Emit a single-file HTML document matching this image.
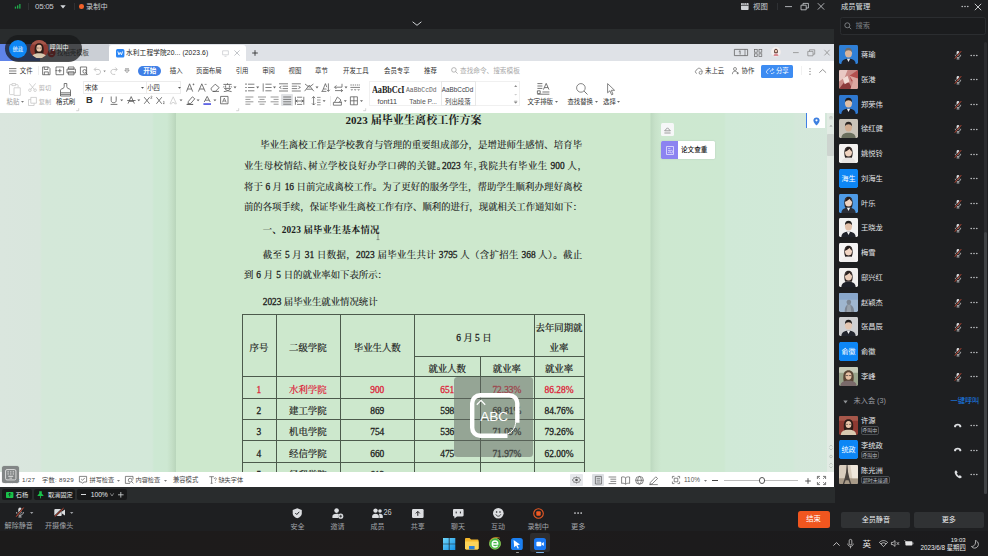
<!DOCTYPE html>
<html lang="zh-CN">
<head>
<meta charset="utf-8">
<title>会议</title>
<style>
*{box-sizing:border-box;margin:0;padding:0}
html,body{width:988px;height:556px;overflow:hidden;background:#1e1f21;}
body{position:relative;font-family:"Liberation Sans","Noto Sans CJK SC",sans-serif;font-size:8px;line-height:1;color:#d8d8d8;}
.abs{position:absolute}
.t{position:absolute;white-space:nowrap;line-height:10px;height:10px}
svg{position:absolute;overflow:visible}
#top1{left:0;top:0;width:836px;height:29px;background:#1e1f21}
#top2{left:0;top:29px;width:834px;height:15px;background:#292c2d}
#panel{left:836px;top:0;width:152px;height:531px;background:#1e1f21}
#wps{left:0;top:44px;width:834px;height:443px;background:#fff;overflow:hidden;color:#333}
#tabbar{left:0;top:0;width:834px;height:17px;background:#dfe2e7}
#menurow{left:0;top:17px;width:834px;height:15px;background:#fff}
#ribbon{left:0;top:32px;width:834px;height:37px;background:#fff}
#doc{left:0;top:69px;width:834px;height:359px;background:#d4e7d8;overflow:hidden}
#page{left:176px;top:0;width:474px;height:359px;background:#cde8cd;}
#status{left:0;top:428px;width:834px;height:15px;background:#fff}
#zoombar{left:0;top:487px;width:836px;height:14px;background:#1e1f21}
#meetbar{left:0;top:501px;width:988px;height:30px;background:#1e1f21}
#taskbar{left:0;top:531px;width:988px;height:25px;background:#1d1c1c}
#doc{background:linear-gradient(90deg,#dae6de 0,#d9e6dd 40px,#d4e8d9 42px,#d3e8d9 152px,#cde8d3 154px,#cde8d2 167px,#c4dfc6 172px,#b9d5bb 176px,#cde8cd 177px,#cde8cd 650px,#bdd9c0 651px,#c7e1c9 655px,#cde8d0 661px,#cde8d1 724px,#d0e9d7 726px,#d1e9d8 793px,#d4e8da 795px,#d5e7db 834px)}
#page{background:#cde8cd}
.ln{position:absolute;left:67.900px;width:338.200px;height:12px;line-height:12px;font-size:9.390px;color:#1c1c1c;font-family:"Liberation Serif","Noto Serif CJK SC",serif;font-weight:400;-webkit-text-stroke:.15px currentColor;white-space:nowrap;text-align:justify;text-align-last:justify}
.ln.nj{text-align:left;text-align-last:left;width:auto}
.tb{position:absolute;background:#4c5a4c}
.tc{position:absolute;height:12px;line-height:12px;font-size:9.400px;color:#1c1c1c;font-family:"Liberation Serif","Noto Serif CJK SC",serif;font-weight:400;-webkit-text-stroke:.22px currentColor;white-space:nowrap;text-align:center}
.red{color:#de2238}
.d{-webkit-text-stroke:.28px currentColor}
.bd .d{-webkit-text-stroke:0}
</style>
</head>
<body>
<div id="top1" class="abs">
  <svg style="left:14px;top:3px" width="8" height="6" viewBox="0 0 8 6"><rect x="0.8" y="3.6" width="1.3" height="2" fill="#1fae4b"/><rect x="3" y="2.4" width="1.3" height="3.2" fill="#1fae4b"/><rect x="5.2" y="1" width="1.3" height="4.6" fill="#1fae4b"/></svg>
  <div class="abs" style="left:28px;top:3px;width:1px;height:7px;background:#2f3134"></div>
  <div class="t" style="left:35px;top:1.8px;font-size:8px;color:#c9ccd1;letter-spacing:-0.3px">05:05</div>
  <svg style="left:60px;top:5px" width="6" height="4" viewBox="0 0 6 4"><path d="M0.3 0.3h5.4L3 3.5z" fill="#d5d8dc"/></svg>
  <div class="abs" style="left:74px;top:3px;width:1px;height:7px;background:#2f3134"></div>
  <div class="abs" style="left:79.2px;top:4px;width:4.6px;height:4.6px;border-radius:50%;background:#f0602a"></div>
  <div class="t" style="left:86px;top:1.5px;font-size:7.2px;color:#c9ccd1">录制中</div>
  <svg style="left:411.800px;top:20.500px" width="10" height="6" viewBox="0 0 10 6"><path d="M.6 .8 L5 4.300 L9.400 .8" fill="none" stroke="#d0d3d6" stroke-width="1"/></svg>
  <svg style="left:741px;top:2.5px" width="8" height="8" viewBox="0 0 8 8"><rect x="0" y="0" width="7.6" height="7" rx="0.8" fill="#d0d3d6"/><path d="M0 2.4h7.6" stroke="#1e1f21" stroke-width="0.7"/><path d="M2 0v1.6M3.8 0v1.6M5.6 0v1.6" stroke="#1e1f21" stroke-width="0.6"/></svg>
  <div class="t" style="left:753px;top:1.5px;font-size:7.4px;color:#c9ccd1">视图</div>
  <div class="abs" style="left:777px;top:3px;width:1px;height:7px;background:#2f3134"></div>
  <svg style="left:785px;top:2px" width="42" height="9" viewBox="0 0 42 9"><g fill="none" stroke="#cfd2d6" stroke-width="0.8"><path d="M0 4.6h7"/><path d="M16 3.2h5.2v4.6H16z"/><path d="M18 3.2V1.4h5.4v4.6h-2.2"/><path d="M32.8 1.2l6.4 6.4M39.2 1.2l-6.4 6.4"/></g></svg>
</div>
<div id="top2" class="abs"></div>
<div id="wps" class="abs">
<div id="tabbar" class="abs">
  <div class="abs" style="left:0;top:0;width:40px;height:17px;background:#5f83e8"></div>
  <div class="abs" style="left:40px;top:0;width:69px;height:17px;background:#cbcfd5"></div>
  <svg style="left:47px;top:3.500px" width="9" height="10" viewBox="0 0 9 10"><path d="M4.500.5c2.200 0 4 1.800 4 4.200S6.700 9.300 4.500 9.300.5 7.500.5 4.700c0-1 .3-1.700.8-2.300L3 5.500 4.500.5z" fill="#d8302c"/><path d="M3.400 6.400h2.800" stroke="#fff" stroke-width=".8"/></svg>
  <div class="t" style="left:57px;top:4.200px;font-size:6.400px;color:#444">找稻壳模板</div>
  <div class="abs" style="left:109px;top:.5px;width:137px;height:17px;background:#fff;border-radius:3px 3px 0 0"></div>
  <svg style="left:115.500px;top:4.700px" width="8.400" height="8.400" viewBox="0 0 10 10"><rect width="10" height="10" rx="1.800" fill="#2b86f5"/><path d="M2.200 3l1.300 4 1.500-3 1.500 3 1.300-4" fill="none" stroke="#fff" stroke-width="1.100"/></svg>
  <div class="t" style="left:126px;top:4.300px;font-size:6.700px;color:#222;letter-spacing:.12px">水利工程学院20... (2023.6)</div>
  <svg style="left:221.500px;top:5.700px" width="7" height="7" viewBox="0 0 7 7"><path d="M.6.800h5.800v4H.6zM2.500 6.300h2" fill="none" stroke="#c4c7cc" stroke-width=".7"/></svg>
  <svg style="left:233.800px;top:6px" width="6" height="6" viewBox="0 0 6 6"><path d="M.4.400l5.200 5.200M5.600.4L.4 5.600" stroke="#b4b7bc" stroke-width=".8"/></svg>
  <svg style="left:251.500px;top:5.800px" width="6" height="6" viewBox="0 0 6 6"><path d="M3 .2v5.600M.2 3h5.600" stroke="#333" stroke-width=".9"/></svg>
  <svg style="left:734px;top:5px" width="14" height="7" viewBox="0 0 14 7"><path d="M.4.400h13.200v6.200H.4z" fill="none" stroke="#555" stroke-width=".7"/><path d="M11 .4v6.200" stroke="#555" stroke-width=".6"/><path d="M4.800 2.600l1.300-.9v3.800" fill="none" stroke="#555" stroke-width=".7"/></svg>
  <svg style="left:754.200px;top:4.500px" width="8.400" height="8" viewBox="0 0 8.400 8"><g fill="none" stroke="#666" stroke-width=".7"><rect x=".4" y=".4" width="2.800" height="2.800"/><rect x="5" y=".4" width="2.800" height="2.800"/><rect x=".4" y="4.800" width="2.800" height="2.800"/><rect x="5" y="4.800" width="2.800" height="2.800"/></g></svg>
  <svg style="left:770.700px;top:3.200px" width="9.800" height="9.800" viewBox="0 0 10 10"><circle cx="5" cy="5" r="5" fill="#f4efee"/><path d="M3.200 4.500c0-2 .8-2.800 1.900-2.800s1.900.8 1.900 2.800c0 1-.2 1.600-.4 2H3.600c-.2-.4-.4-1-.4-2z" fill="#5b3a30"/><ellipse cx="5.100" cy="4.200" rx="1.100" ry="1.400" fill="#f0cdb8"/><path d="M2.600 9.300c0-1.800 1-2.700 2.500-2.700s2.500.9 2.500 2.700z" fill="#d98a92"/></svg>
  <svg style="left:792.500px;top:4.500px" width="38" height="8" viewBox="0 0 38 8"><g fill="none" stroke="#888" stroke-width=".75"><path d="M0 3.600h5.700"/><path d="M14.800 2.400h5.200v4.400h-5.200z"/><path d="M16.500 2.400V.8h5.200v4.400h-1.700"/><path d="M31.400.8l5.200 5.600M36.600.8l-5.200 5.600"/></g></svg>
</div>
<div id="menurow" class="abs" style="height:18px">
  <svg style="left:8.500px;top:6.600px" width="8" height="6" viewBox="0 0 8 6"><path d="M0 .6h7.400M0 3h7.400M0 5.400h7.400" stroke="#444" stroke-width=".7"/></svg>
  <div class="t" style="left:19.800px;top:5.100px;font-size:6.400px;color:#333">文件</div>
  <div class="abs" style="left:37.500px;top:5px;width:1px;height:9px;background:#eeeeee"></div>
  <svg style="left:42px;top:4.900px" width="90" height="9.700" viewBox="0 0 90 9" preserveAspectRatio="none">
    <g fill="none" stroke="#555" stroke-width=".75">
      <path d="M.6.900h5.900l1.500 1.500v5.700H.6z"/><path d="M2.300.9v2.300h3.600V.9M2.300 8.100V5.500h4v2.600"/>
      <path d="M14 .9h7.600v7.200H14z"/><path d="M16 4.400h3.600M17.800 2.600v3.600M13.500 4.300h2"/>
      <path d="M26.400.9h5.600v2H26.400zM25 2.900h8.400v3.600H25zM26.400 5.400h5.600v2.800h-5.600z"/>
      <path d="M38.400.9h6.200v7.200h-6.200z"/><circle cx="42.600" cy="5" r="1.700" fill="#fff"/><path d="M43.800 6.300l1.800 1.800"/>
    </g>
    <g fill="none" stroke="#bbb" stroke-width=".8"><path d="M52.400 3.200h3.600c1.500 0 2.500 1 2.500 2.300s-1 2.300-2.500 2.300h-1.800"/><path d="M54 1.400l-1.800 1.800 1.800 1.800"/>
      <path d="M75 3.200h-3.600c-1.500 0-2.500 1-2.500 2.300s1 2.300 2.500 2.300h1.800"/><path d="M73.400 1.400l1.800 1.800-1.800 1.800"/></g>
    <path d="M61.400 4.200h2.400l-1.200 1.500z" fill="#888"/>
    <path d="M82.800 3.800h4.400l-2.200 2.400z" fill="none" stroke="#666" stroke-width=".6"/><path d="M83 2.600h4" stroke="#666" stroke-width=".6"/>
  </svg>
  <div class="abs" style="left:138.300px;top:4.600px;width:22.700px;height:10.800px;border-radius:5.400px;background:#3f7fe6"></div>
  <div class="t" style="left:143.200px;top:5.100px;font-size:6.500px;color:#fff;font-weight:bold">开始</div>
  <div class="t" style="left:169.800px;top:5.300px;font-size:6.400px;color:#333">插入</div>
  <div class="t" style="left:196px;top:5.300px;font-size:6.400px;color:#333">页面布局</div>
  <div class="t" style="left:235.700px;top:5.300px;font-size:6.400px;color:#333">引用</div>
  <div class="t" style="left:262.200px;top:5.300px;font-size:6.400px;color:#333">审阅</div>
  <div class="t" style="left:288.600px;top:5.300px;font-size:6.400px;color:#333">视图</div>
  <div class="t" style="left:315px;top:5.300px;font-size:6.400px;color:#333">章节</div>
  <div class="t" style="left:343px;top:5.300px;font-size:6.400px;color:#333">开发工具</div>
  <div class="t" style="left:384px;top:5.300px;font-size:6.400px;color:#333">会员专享</div>
  <div class="t" style="left:424px;top:5.300px;font-size:6.400px;color:#333">推荐</div>
  <svg style="left:450.500px;top:6.300px" width="7" height="7" viewBox="0 0 7 7"><circle cx="2.900" cy="2.900" r="2.300" fill="none" stroke="#999" stroke-width=".7"/><path d="M4.600 4.600l2 2" stroke="#999" stroke-width=".7"/></svg>
  <div class="t" style="left:460px;top:5.300px;font-size:6.650px;color:#aaa">查找命令、搜索模板</div>
  <svg style="left:695px;top:6px" width="8" height="8" viewBox="0 0 8 8"><path d="M2 6.300c-1 0-1.700-.7-1.700-1.600 0-.8.600-1.500 1.400-1.600C2 2 2.900 1.200 4 1.200c1.300 0 2.300.9 2.400 2.100.8.100 1.300.7 1.300 1.500" fill="none" stroke="#666" stroke-width=".7"/><circle cx="5.600" cy="5.800" r="1.500" fill="none" stroke="#666" stroke-width=".7"/></svg>
  <div class="t" style="left:705px;top:5.300px;font-size:6.400px;color:#333">未上云</div>
  <svg style="left:731.500px;top:6px" width="7" height="8" viewBox="0 0 7 8"><circle cx="3" cy="2" r="1.500" fill="none" stroke="#666" stroke-width=".7"/><path d="M.4 7.200c0-2 1-3 2.600-3 1.400 0 2.300.8 2.600 2M4.600 6.200h2.200M5.700 5.100v2.200" fill="none" stroke="#666" stroke-width=".7"/></svg>
  <div class="t" style="left:741.500px;top:5.300px;font-size:6.400px;color:#333">协作</div>
  <div class="abs" style="left:761px;top:3.500px;width:32px;height:13px;border-radius:1.500px;background:#3d8cf2"></div>
  <svg style="left:765.800px;top:6px" width="8.400" height="8" viewBox="0 0 8.400 8"><path d="M2.200 6.500c-1 0-1.800-.7-1.800-1.700 0-.9.600-1.500 1.400-1.600.3-1 1.100-1.700 2.200-1.700M5 6.500h1.400c.9 0 1.600-.6 1.600-1.500" fill="none" stroke="#fff" stroke-width=".7"/><path d="M4.200 4.800c.4-1.600 1.500-2.400 3-2.400M6.200 1.200l1.300 1.200-1.300 1.200" fill="none" stroke="#fff" stroke-width=".7"/></svg>
  <div class="t" style="left:775.900px;top:5.300px;font-size:6.400px;color:#fff">分享</div>
  <div class="abs" style="left:800.500px;top:5px;width:1px;height:9px;background:#f1f1f1"></div>
  <svg style="left:808.500px;top:6.800px" width="2" height="7" viewBox="0 0 2 7"><circle cx="1" cy=".8" r=".6" fill="#666"/><circle cx="1" cy="3.500" r=".6" fill="#666"/><circle cx="1" cy="6.200" r=".6" fill="#666"/></svg>
  <svg style="left:819.300px;top:8px" width="7.400" height="4" viewBox="0 0 7.400 4"><path d="M.3 3.700L3.700.5l3.400 3.200" fill="none" stroke="#666" stroke-width=".7"/></svg>
</div>
<div id="ribbon" class="abs" style="top:35px;height:34px">
  <!-- paste / cut / copy / format painter : coords relative to ribbon top (y=79 abs) -->
  <svg style="left:9px;top:3.500px" width="12" height="13" viewBox="0 0 12 13"><g fill="none" stroke="#c9c9c9" stroke-width=".8"><path d="M3 1.600H1.200c-.4 0-.7.300-.7.700v8.600c0 .4.300.7.700.7h3.600"/><path d="M3 .6h3.600v2H3z"/><path d="M6.600 1.600h1.800c.4 0 .7.300.7.700v2"/><path d="M5 4.800h6.300v7.600H5z" fill="#fff"/></g></svg>
  <div class="t" style="left:6.600px;top:18.400px;font-size:6.300px;color:#9a9a9a">粘贴</div>
  <svg style="left:20.500px;top:22.200px" width="3" height="2" viewBox="0 0 3 2"><path d="M0 0h3L1.500 1.800z" fill="#777"/></svg>
  <svg style="left:28px;top:4px" width="9" height="9" viewBox="0 0 9 9"><g fill="none" stroke="#c4c4c4" stroke-width=".75"><path d="M1.400.4l4.800 6M7.600.4L2.800 6.400"/><circle cx="1.900" cy="7.200" r="1.300"/><circle cx="7.100" cy="7.200" r="1.300"/></g></svg>
  <div class="t" style="left:38.800px;top:3.800px;font-size:6.200px;color:#b0b0b0">剪切</div>
  <svg style="left:28px;top:17.500px" width="9" height="9" viewBox="0 0 9 9"><g fill="none" stroke="#c4c4c4" stroke-width=".75"><path d="M2.800.4h5.600v5.800H2.800z"/><path d="M2.800 2.600H.5v5.900h5.600V6.200"/></g></svg>
  <div class="t" style="left:38.800px;top:17.600px;font-size:6.200px;color:#b0b0b0">复制</div>
  <svg style="left:60px;top:3.500px" width="11" height="14" viewBox="0 0 11 14"><g fill="none" stroke="#555" stroke-width=".8"><path d="M4.200.5h2.600v3.200c0 .8.400 1.300 1.200 1.700l1.800.8c.5.200.7.600.7 1v5.800H.5V7.200c0-.4.200-.8.700-1l1.800-.8c.8-.4 1.200-.9 1.200-1.700z"/><path d="M.5 9.800h10M.5 11.400h10"/></g></svg>
  <div class="t" style="left:56px;top:18.400px;font-size:6.400px;color:#333">格式刷</div>
  <svg style="left:75.500px;top:29.300px" width="3" height="3" viewBox="0 0 3 3"><path d="M2.700.2v2.500H.2" fill="none" stroke="#aaa" stroke-width=".5"/></svg>
  <!-- font boxes -->
  <div class="abs" style="left:83.200px;top:2.200px;width:62.500px;height:12.500px;border:1px solid #ececec;border-right:none"></div>
  <div class="abs" style="left:145.700px;top:2.200px;width:35.200px;height:12.500px;border:1px solid #ececec"></div>
  <div class="t" style="left:85px;top:3.800px;font-size:6.500px;color:#333">宋体</div>
  <svg style="left:140.500px;top:8px" width="3" height="2" viewBox="0 0 3 2"><path d="M0 0h3L1.500 1.800z" fill="#555"/></svg>
  <div class="t" style="left:147.200px;top:3.800px;font-size:6.300px;color:#333">小四</div>
  <svg style="left:177.500px;top:8px" width="3" height="2" viewBox="0 0 3 2"><path d="M0 0h3L1.500 1.800z" fill="#555"/></svg>
  <!-- row 1 font tools -->
  <svg style="left:186px;top:4px" width="52" height="9" viewBox="0 0 52 9">
    <g fill="none" stroke="#555" stroke-width=".8"><path d="M.5 8.600L3.600.8l3.100 7.800M1.500 6h4.200"/><path d="M6.600 1.400h1.800M7.500.5v1.800" stroke-width=".6"/>
    <path d="M12.400 8.600L15.800.8l3.400 7.800M13.500 6h4.600"/><path d="M18.600 1.400h2" stroke-width=".6"/>
    <path d="M25.200 5.200l4-4 4 3.400-3.800 3.800h-2.600l-1.600-1.600z"/><path d="M27 8.400h6"/>
    <path d="M37.400 1.400h8.200M41.500.3v1.100M39.600 2.400v2.200M43.400 2.400v2.200M38 3.200l-.6 1.200M45 3.200l.6 1.200M38.200 5.400h6.400c-.8 1.600-2.800 2.800-6.800 3.200M38.800 5.600c1.200 1.600 3.600 2.600 6.800 3"/></g>
    <path d="M47.500 3.600h3L49 5.400z" fill="#666"/>
  </svg>
  <!-- row 2 font tools -->
  <div class="t" style="left:86px;top:16px;font-size:9.400px;font-weight:bold;color:#333;font-family:'Liberation Sans',sans-serif;line-height:10px">B</div>
  <div class="t" style="left:100.400px;top:16px;font-size:9.400px;font-style:italic;color:#555;font-family:'Liberation Sans',sans-serif;line-height:10px">I</div>
  <svg style="left:110px;top:96px;top:17px" width="130" height="10" viewBox="0 0 130 10">
    <g fill="none" stroke="#555" stroke-width=".8">
      <path d="M1.200 .5v3.900c0 1.500.9 2.300 2.500 2.300s2.500-.8 2.500-2.300V.5M.6 8.400h6.800"/>
      <path d="M18 7.600L21.200.6l3.200 7M19.200 5.400h4M17.200 4.500h8.400"/>
      <path d="M34.200 1.200l5.400 6.600M39.600 1.200l-5.400 6.600"/><path d="M40.600.5c.3-.5 1.400-.5 1.400.2 0 .5-.6.900-1.400 1.600h1.600" stroke-width=".55"/>
      <path d="M46.400 1.200l5.400 6.600M51.800 1.200l-5.400 6.600"/><path d="M53 5.800c.3-.5 1.400-.5 1.400.2 0 .5-.6.900-1.400 1.600h1.600" stroke-width=".55"/>
      <path d="M60 7.800L63.200.8l3.200 7h-1.700l-.5-1.300h-2l-.5 1.300z" stroke="#ccc"/>
      <path d="M78.400 5.400L82.400.8l2.400 2-4 4.600-2.800.4z"/><path d="M76.600 8.400h6.600" stroke-width="1"/>
      <path d="M94.200 6L97.200.4l3 5.600M95.300 4.200h3.800"/>
      <path d="M110.600.4h7.400v7.400h-7.400z"/><path d="M112.400 6.400l1.900-4.400 1.900 4.400M113 5h2.600" stroke-width=".65"/>
    </g>
    <path d="M93.400 7.400h7.600v1.300h-7.600z" fill="#1d24d8"/>
    <g fill="#666"><path d="M10.200 3.400h3l-1.500 1.800z"/><path d="M27.300 3.400h3l-1.500 1.800z"/><path d="M69.500 3.400h3L71 5.200z"/><path d="M86.600 3.400h3l-1.500 1.800z"/><path d="M103.400 3.400h3l-1.500 1.800z"/></g>
  </svg>
  <svg style="left:236px;top:29.300px" width="3" height="3" viewBox="0 0 3 3"><path d="M2.700.2v2.500H.2" fill="none" stroke="#aaa" stroke-width=".5"/></svg>
  <!-- paragraph row 1 -->
  <svg style="left:245px;top:4px" width="118" height="9" viewBox="0 0 118 9">
    <g fill="none" stroke="#555" stroke-width=".75">
      <path d="M3 1.200h6.400M3 4.500h6.400M3 7.800h6.400"/><path d="M.4 1.200h1.200M.4 4.500h1.200M.4 7.800h1.200" stroke-width="1.200"/>
      <path d="M20.400 1.200h6.200M20.400 4.500h6.200M20.400 7.800h6.200"/><path d="M18.200.4v8.200" stroke-width=".7"/>
      <path d="M34 .8h9M37.600 3.200H43M37.600 5.600H43M34 8h9M36.400 3.200L34.400 4.400l2 1.200"/>
      <path d="M46.800 .8h9M46.800 3.200h5.400M46.800 5.600h5.400M46.800 8h9M53.400 3.200l2 1.200-2 1.200"/>
      <path d="M60 1l4.200 3.200L68.400 1M59.600 8.200l4.600-6 4.600 6M61.400 6.200h5.600"/>
      <path d="M77.400 8.200L80.400.6l1.400 3.600M78.400 6h3M83.400.4v7.800M82 6.800l1.400 1.600 1.400-1.600M76.400 8.400h5"/>
      <path d="M97 .8v3.400h-7.400M91.400 2.400l-1.800 1.800 1.800 1.800M90 7.600h7.600M96 6.200l1.600 1.400L96 9"/>
      <path d="M105.400 2h9.600" stroke-dasharray="1.400 .8"/><path d="M105.400 4.400h9.600"/><path d="M106 6l.8 1.400.8-1.400M109.400 6l.8 1.400.8-1.400M112.800 6l.8 1.400.8-1.400" stroke-width=".55"/>
    </g>
    <g fill="#666"><path d="M11.200 3.600h3l-1.500 1.800z"/><path d="M28 3.600h3l-1.500 1.800z"/><path d="M70.500 3.600h3L72 5.400z"/><path d="M99.500 3.600h3L101 5.400z"/></g>
  </svg>
  <!-- paragraph row 2 -->
  <div class="abs" style="left:281px;top:15.400px;width:12.300px;height:11.800px;background:#e1e3e6;border-radius:1px"></div>
  <svg style="left:245px;top:17px" width="120" height="10" viewBox="0 0 120 10">
    <g fill="none" stroke="#777" stroke-width=".75">
      <path d="M.4 1h8M.4 3.400h5M.4 5.800h8M.4 8.200h5"/>
      <path d="M13 1h8M14.500 3.400h5M13 5.800h8M14.500 8.200h5"/>
      <path d="M25.600 1h8M28.600 3.400h5M25.600 5.800h8M28.600 8.200h5"/>
      <path d="M38.200 1h8M38.200 3.400h8M38.200 5.800h8M38.200 8.200h8" stroke="#555"/>
      <path d="M50.400.8v8M58.800.8v8M52 1.200h5.200M50.400 5h8.400M52.600 3.800L51 5l1.600 1.200M56.600 3.800L58.200 5l-1.600 1.200M52 8.400h5.200" stroke="#555"/>
      <path d="M68.600.6v8.400M67 2.200L68.600.6l1.600 1.600M67 7.400l1.600 1.600 1.600-1.600" stroke="#555"/><path d="M72 1.400h3.600M72 4h3.600M72 6.400h3.600M72 8.800h3.600"/>
      <path d="M89.600 6.200L92.400 1l3.600 3-2 2.400M88.400 6.400h8v2.800h-8zM95.400 4.800c.8.600 1.200 1.200 1 2" stroke="#555"/>
      <path d="M105.400.8h7v8h-7zM108.900.8v8M105.400 4.800h7" stroke="#555"/>
    </g>
    <g fill="#666"><path d="M77.600 4.200h3l-1.500 1.800z"/><path d="M98.800 4.200h3l-1.500 1.800z"/><path d="M115 4.200h3l-1.500 1.800z"/></g>
  </svg>
  <div class="abs" style="left:329.500px;top:16.500px;width:1px;height:10px;background:#ececec"></div>
  <svg style="left:362.500px;top:29.300px" width="3" height="3" viewBox="0 0 3 3"><path d="M2.700.2v2.500H.2" fill="none" stroke="#aaa" stroke-width=".5"/></svg>
  <!-- styles gallery -->
  <div class="abs" style="left:369.200px;top:2.200px;width:150.600px;height:25px;border:1px solid #f0f0f0"></div>
  <div class="abs" style="left:440.500px;top:2.200px;width:35px;height:25px;border:1px solid #e8e8e8"></div>
  <div class="t" style="left:371.600px;top:5.500px;font-size:9.300px;font-weight:bold;color:#222;font-family:'Liberation Serif',serif;line-height:10px;letter-spacing:-.1px;transform-origin:0 50%;transform:scaleX(.888)">AaBbCcI</div>
  <div class="t" style="left:406px;top:6.500px;font-size:6.400px;color:#666;font-family:'Liberation Mono',monospace;line-height:10px;letter-spacing:0px">AaBbCcDd</div>
  <div class="t" style="left:441.800px;top:6.400px;font-size:6.350px;color:#3a3f4a;line-height:10px">AaBbCcDd</div>
  <div class="t" style="left:377.400px;top:18.400px;font-size:7.250px;color:#444">font11</div>
  <div class="t" style="left:409.300px;top:18.400px;font-size:6.870px;color:#555">Table P...</div>
  <div class="t" style="left:445px;top:18.400px;font-size:6.400px;color:#444">列出段落</div>
  <svg style="left:514px;top:5.500px" width="3.400" height="20" viewBox="0 0 3.400 20"><path d="M.2 1.800h3L1.700.2z" fill="#666"/><path d="M.2 9h3L1.700 10.600z" fill="#ccc"/><path d="M.2 16.800h3L1.700 18.400zM.2 16h3" fill="#888" stroke="#888" stroke-width=".4"/></svg>
  <!-- right tools -->
  <svg style="left:536.600px;top:4px" width="12.400" height="12" viewBox="0 0 12.400 12"><g fill="none" stroke="#555" stroke-width=".8"><path d="M.4.600h5M.4 3h5M.4 5.400h5M.4 11.200h12M5.400 9h7"/><path d="M.4 7.800h2.800v2.800H.4z"/><path d="M6.400 6.600L9.200.4 12 6.600M7.400 4.600h3.600"/></g></svg>
  <div class="t" style="left:527.400px;top:18.400px;font-size:6.400px;color:#333">文字排版</div>
  <svg style="left:554.600px;top:22.200px" width="3" height="2" viewBox="0 0 3 2"><path d="M0 0h3L1.500 1.800z" fill="#666"/></svg>
  <svg style="left:576.300px;top:4px" width="12" height="12" viewBox="0 0 12 12"><circle cx="4.900" cy="4.900" r="4.300" fill="none" stroke="#666" stroke-width=".8"/><path d="M8.100 8.100l3.400 3.400" stroke="#666" stroke-width=".9"/></svg>
  <div class="t" style="left:567.400px;top:18.400px;font-size:6.400px;color:#333">查找替换</div>
  <svg style="left:594.600px;top:22.200px" width="3" height="2" viewBox="0 0 3 2"><path d="M0 0h3L1.500 1.800z" fill="#666"/></svg>
  <svg style="left:606.600px;top:3.800px" width="9" height="12.500" viewBox="0 0 9 12.500"><path d="M.6.600v9.200l2.300-2 1.700 4 1.400-.6-1.700-3.900h3.300z" fill="none" stroke="#666" stroke-width=".8" stroke-linejoin="round"/></svg>
  <div class="t" style="left:603px;top:18.400px;font-size:6.400px;color:#333">选择</div>
  <svg style="left:616.800px;top:22.200px" width="3" height="2" viewBox="0 0 3 2"><path d="M0 0h3L1.500 1.800z" fill="#666"/></svg>
</div>
<div id="doc" class="abs">
 <div id="page" class="abs">
  <div class="ln nj bd" style="left:169.400px;top:.8px;font-size:11px;font-weight:bold;-webkit-text-stroke:0;letter-spacing:.1px"><span class="d">2023</span> 届毕业生离校工作方案</div>
  <div class="ln" style="left:84.300px;width:321.800px;top:25.900px">毕业生离校工作是学校教育与管理的重要组成部分，是增进师生感情、培育毕</div>
  <div class="ln" style="top:46.800px;font-feature-settings:'halt' 1">业生母校情结、树立学校良好办学口碑的关键。<span class="d">2023</span> 年，我院共有毕业生 <span class="d">900</span> 人，</div>
  <div class="ln" style="top:67.600px">将于 <span class="d">6</span> 月 <span class="d">16</span> 日前完成离校工作。为了更好的服务学生，帮助学生顺利办理好离校</div>
  <div class="ln" style="top:88.400px">前的各项手续，保证毕业生离校工作有序、顺利的进行，现就相关工作通知如下：</div>
  <div class="ln nj bd" style="left:86.700px;top:111.200px;font-weight:bold;-webkit-text-stroke:0;letter-spacing:.14px">一、<span class="d">2023</span> 届毕业生基本情况</div>
  <div class="ln" style="left:86.700px;width:319.400px;top:135.600px">截至 <span class="d">5</span> 月 <span class="d">31</span> 日数据，<span class="d">2023</span> 届毕业生共计 <span class="d">3795</span> 人（含扩招生 <span class="d">368</span> 人）。截止</div>
  <div class="ln nj" style="top:156.400px;word-spacing:.6px">到 <span class="d">6</span> 月 <span class="d">5</span> 日的就业率如下表所示：</div>
  <div class="ln nj" style="left:86.700px;top:183px"><span class="d">2023</span> 届毕业生就业情况统计</div>
  <svg style="left:199.500px;top:119px" width="4" height="8" viewBox="0 0 4 8"><path d="M.6.400h2.800M2 .4v7.200M.6 7.600h2.800" stroke="#555" stroke-width=".6" fill="none"/></svg>
  <!-- table: page-left = 176 abs, doc-top = 113 abs -->
  <div class="tb" style="left:66.300px;top:200.900px;width:342.600px;height:.8px"></div>
  <div class="tb" style="left:238.300px;top:242.500px;width:170.600px;height:.8px"></div>
  <div class="tb" style="left:66.300px;top:263.300px;width:342.600px;height:.8px"></div>
  <div class="tb" style="left:66.300px;top:284.700px;width:342.600px;height:.8px"></div>
  <div class="tb" style="left:66.300px;top:305.900px;width:342.600px;height:.8px"></div>
  <div class="tb" style="left:66.300px;top:327.300px;width:342.600px;height:.8px"></div>
  <div class="tb" style="left:66.300px;top:348.600px;width:342.600px;height:.8px"></div>
  <div class="tb" style="left:66.300px;top:200.900px;width:.8px;height:160px"></div>
  <div class="tb" style="left:99.500px;top:200.900px;width:.8px;height:160px"></div>
  <div class="tb" style="left:164.200px;top:200.900px;width:.8px;height:160px"></div>
  <div class="tb" style="left:238.300px;top:200.900px;width:.8px;height:160px"></div>
  <div class="tb" style="left:304.200px;top:242.500px;width:.8px;height:120px"></div>
  <div class="tb" style="left:357.600px;top:200.900px;width:.8px;height:160px"></div>
  <div class="tb" style="left:408.400px;top:200.900px;width:.8px;height:160px"></div>
  <div class="tc" style="left:66.300px;width:33.200px;top:229px">序号</div>
  <div class="tc" style="left:99.500px;width:64.700px;top:229px">二级学院</div>
  <div class="tc" style="left:164.200px;width:74.100px;top:229px">毕业生人数</div>
  <div class="tc" style="left:238.300px;width:119.300px;top:219px"><span class="d">6</span> 月 <span class="d">5</span> 日</div>
  <div class="tc" style="left:357.600px;width:50.800px;top:209.400px">去年同期就</div>
  <div class="tc" style="left:357.600px;width:50.800px;top:228.500px">业率</div>
  <div class="tc" style="left:238.300px;width:65.900px;top:249.700px">就业人数</div>
  <div class="tc" style="left:304.200px;width:53.400px;top:249.700px">就业率</div>
  <div class="tc" style="left:357.600px;width:50.800px;top:249.700px">就业率</div>
  <div class="tc red" style="left:66.300px;width:33.200px;top:270.500px"><span class="d">1</span></div>
  <div class="tc red" style="left:99.500px;width:64.700px;top:270.500px">水利学院</div>
  <div class="tc red" style="left:164.200px;width:74.100px;top:270.500px"><span class="d">900</span></div>
  <div class="tc red" style="left:238.300px;width:65.900px;top:270.500px"><span class="d">651</span></div>
  <div class="tc red" style="left:304.200px;width:53.400px;top:270.500px"><span class="d">72.33%</span></div>
  <div class="tc red" style="left:357.600px;width:50.800px;top:270.500px"><span class="d">86.28%</span></div>
  <div class="tc" style="left:66.300px;width:33.200px;top:292px"><span class="d">2</span></div>
  <div class="tc" style="left:99.500px;width:64.700px;top:292px">建工学院</div>
  <div class="tc" style="left:164.200px;width:74.100px;top:292px"><span class="d">869</span></div>
  <div class="tc" style="left:238.300px;width:65.900px;top:292px"><span class="d">598</span></div>
  <div class="tc" style="left:304.200px;width:53.400px;top:292px"><span class="d">68.81%</span></div>
  <div class="tc" style="left:357.600px;width:50.800px;top:292px"><span class="d">84.76%</span></div>
  <div class="tc" style="left:66.300px;width:33.200px;top:313.300px"><span class="d">3</span></div>
  <div class="tc" style="left:99.500px;width:64.700px;top:313.300px">机电学院</div>
  <div class="tc" style="left:164.200px;width:74.100px;top:313.300px"><span class="d">754</span></div>
  <div class="tc" style="left:238.300px;width:65.900px;top:313.300px"><span class="d">536</span></div>
  <div class="tc" style="left:304.200px;width:53.400px;top:313.300px"><span class="d">71.09%</span></div>
  <div class="tc" style="left:357.600px;width:50.800px;top:313.300px"><span class="d">79.26%</span></div>
  <div class="tc" style="left:66.300px;width:33.200px;top:334.700px"><span class="d">4</span></div>
  <div class="tc" style="left:99.500px;width:64.700px;top:334.700px">经信学院</div>
  <div class="tc" style="left:164.200px;width:74.100px;top:334.700px"><span class="d">660</span></div>
  <div class="tc" style="left:238.300px;width:65.900px;top:334.700px"><span class="d">475</span></div>
  <div class="tc" style="left:304.200px;width:53.400px;top:334.700px"><span class="d">71.97%</span></div>
  <div class="tc" style="left:357.600px;width:50.800px;top:334.700px"><span class="d">62.00%</span></div>
  <div class="tc" style="left:66.300px;width:33.200px;top:356px"><span class="d">5</span></div>
  <div class="tc" style="left:99.500px;width:64.700px;top:356px">经贸学院</div>
  <div class="tc" style="left:164.200px;width:74.100px;top:356px"><span class="d">612</span></div>
  <!-- ABC overlay -->
  <div class="abs" style="left:278.100px;top:264px;width:78.500px;height:80px;border-radius:3.500px;background:rgba(98,103,98,.52)"></div>
  <svg style="left:294.300px;top:280.400px" width="49.500" height="45" viewBox="0 0 49.500 45"><path d="M37.500 42.800H10.200c-4.400 0-8-3.600-8-8V10.200c0-4.400 3.600-8 8-8h29.100c4.400 0 8 3.600 8 8v19.600" fill="none" stroke="#fff" stroke-width="4.400"/><path d="M45.600 29.600c-.4 5.400-3.200 9.400-8.200 11.400" fill="none" stroke="#fff" stroke-width="1"/><path d="M6.800 11.800l4.200-4.400 4.200 4.400" fill="none" stroke="#fff" stroke-width="1.300"/><text x="24.200" y="28.300" font-size="13.600" fill="#fff" text-anchor="middle" font-family="Liberation Sans, sans-serif">ABC</text></svg>
 </div>
 <!-- right side widgets -->
 <div class="abs" style="left:660.600px;top:10.400px;width:13.500px;height:12.600px;background:#f6f7f8;border-radius:1.500px"></div>
 <svg style="left:664px;top:13.500px" width="7" height="7" viewBox="0 0 7 7"><path d="M.6 3.800L3.500.8l2.900 3zM.4 6h6.200" fill="none" stroke="#777" stroke-width=".7"/></svg>
 <div class="abs" style="left:660.600px;top:28.400px;width:54.700px;height:17.200px;background:#fff;border-radius:1.500px;box-shadow:0 0 2px rgba(0,0,0,.12)"></div>
 <div class="abs" style="left:660.600px;top:28.400px;width:17px;height:17.200px;background:#8c83f1;border-radius:1.500px 0 0 1.500px"></div>
 <svg style="left:665.500px;top:32.600px" width="8" height="9" viewBox="0 0 8 9"><path d="M.5.500h7v8h-7z" fill="none" stroke="#e9e6ff" stroke-width=".8"/><path d="M2 2.600h2.400M2 4.500h2M2 6.400h1.600" stroke="#e9e6ff" stroke-width=".7"/><circle cx="5.300" cy="5.600" r="1.300" fill="none" stroke="#e9e6ff" stroke-width=".7"/></svg>
 <div class="t" style="left:681px;top:32px;font-size:6.600px;color:#111;font-weight:500">论文查重</div>
 <div class="abs" style="left:806px;top:0;width:19px;height:15px;background:#fff;border-left:1.200px solid #3f7fe6"></div>
 <svg style="left:812.500px;top:3.500px" width="7" height="9" viewBox="0 0 7 9"><path d="M3.500.4C1.700.4.400 1.700.4 3.400c0 2 3.100 5 3.100 5s3.100-3 3.100-5C6.600 1.700 5.300.4 3.500.4z" fill="#3d7fe0"/><circle cx="3.500" cy="3.300" r="1.100" fill="#fff"/></svg>
 <div class="abs" style="left:826.500px;top:0;width:7.500px;height:359px;background:#e2ebe4"></div>
 <div class="abs" style="left:827px;top:21px;width:6.500px;height:22px;background:#cdd4cf;border-radius:1px"></div>
 <svg style="left:828.500px;top:331px" width="4" height="24" viewBox="0 0 4 24"><path d="M.4 2.600L2 1l1.600 1.600M.4 4.400L2 6l1.600-1.600M.4 20.600L2 19l1.600 1.600M.4 22.400L2 24l1.600-1.600" stroke="#9aa39c" stroke-width=".5" fill="none"/><circle cx="2" cy="12.500" r="1.300" fill="none" stroke="#9aa39c" stroke-width=".5"/></svg>
 <svg style="left:828.500px;top:3px" width="4" height="12" viewBox="0 0 4 12"><path d="M.3 1.400h3.400M.3 2.800h3.400M.5 1L2 .2 3.500 1" stroke="#aaa" stroke-width=".5" fill="none"/><path d="M.4 10.600L2 9l1.600 1.600z" fill="#999"/></svg>
</div>
<div id="status" class="abs" style="top:428.500px;height:14.500px">
  <div class="t" style="left:5px;top:2.600px;font-size:6.200px;letter-spacing:.3px;color:#444">页面: 1/27</div>
  <div class="t" style="left:42px;top:2.600px;font-size:6.200px;letter-spacing:.3px;color:#444">字数: 8929</div>
  <svg style="left:79px;top:3.700px" width="8" height="8" viewBox="0 0 8 8"><path d="M.4.400h7.200v5.600H4.800L3.600 7.400 2.400 6H.4z" fill="none" stroke="#555" stroke-width=".7"/><path d="M2.200 3l1.300 1.300 2.300-2.400" fill="none" stroke="#555" stroke-width=".7"/></svg>
  <div class="t" style="left:89.500px;top:2.600px;font-size:6.200px;color:#444">拼写检查</div>
  <svg style="left:117px;top:7px" width="3" height="2" viewBox="0 0 3 2"><path d="M0 0h3L1.500 1.800z" fill="#777"/></svg>
  <svg style="left:125px;top:3.700px" width="9" height="8" viewBox="0 0 9 8"><path d="M5 7.400H.4V.4h7.600v3" fill="none" stroke="#555" stroke-width=".7"/><circle cx="5.200" cy="4.200" r="1.900" fill="none" stroke="#555" stroke-width=".7"/><path d="M6.600 5.600l1.800 1.800" stroke="#555" stroke-width=".7"/></svg>
  <div class="t" style="left:135.500px;top:2.600px;font-size:6.200px;color:#444">内容检查</div>
  <svg style="left:163.500px;top:7px" width="3" height="2" viewBox="0 0 3 2"><path d="M0 0h3L1.500 1.800z" fill="#777"/></svg>
  <div class="t" style="left:173px;top:2.600px;font-size:6.300px;color:#444">兼容模式</div>
  <svg style="left:209px;top:3.700px" width="8" height="8" viewBox="0 0 8 8"><path d="M.3.700h4.600M2.600.7v6.600M1.600 7.300h2" fill="none" stroke="#555" stroke-width=".7"/><path d="M5.200 3c0-.8.500-1.200 1.100-1.200.7 0 1.100.4 1.100 1 0 .9-1.100.9-1.100 2M6.300 6v.8" fill="none" stroke="#555" stroke-width=".6"/></svg>
  <div class="t" style="left:218.400px;top:2.600px;font-size:6.200px;color:#444">缺失字体</div>
  <!-- right -->
  <div class="abs" style="left:570px;top:1.500px;width:12.700px;height:12px;background:#e6e8eb;border-radius:1px"></div>
  <svg style="left:571.800px;top:3.800px" width="9" height="8" viewBox="0 0 9 8"><path d="M.4 4c1-1.700 2.400-2.500 4.100-2.500S7.600 2.300 8.600 4c-1 1.700-2.400 2.500-4.100 2.500S1.400 5.700.4 4z" fill="none" stroke="#555" stroke-width=".7"/><circle cx="4.500" cy="4" r="1.300" fill="#555"/><path d="M1.600 1.200l.8.900M4.500.3v1M7.400 1.200l-.8.900M1.600 6.800l.8-.9M7.400 6.800l-.8-.9M4.500 7.700v-1" stroke="#555" stroke-width=".5"/></svg>
  <div class="abs" style="left:591.700px;top:1.500px;width:12.300px;height:12px;background:#dcdfe3;border-radius:1px"></div>
  <svg style="left:594.800px;top:3.500px" width="66" height="9" viewBox="0 0 66 9"><g fill="none" stroke="#555" stroke-width=".7">
    <path d="M.4.400h6v7.600h-6z"/><path d="M1.700 2.400h3.400M1.700 4.200h3.400M1.700 6h3.400" stroke-width=".6"/>
    <path d="M13.600 1h7.600M15.400 3.200h5.800M15.400 5.400h5.800M13.600 7.600h7.600"/>
    <path d="M26.600 1c1.600-.4 3 0 4 .8 1-.8 2.400-1.200 4-.8v6.400c-1.600-.4-3 0-4 .8-1-.8-2.400-1.200-4-.8zM30.600 1.800v6.400"/>
    <circle cx="44.500" cy="4.300" r="3.900"/><path d="M40.600 4.300h7.800M44.500.4c-2.400 2.400-2.400 5.400 0 7.800M44.500.4c2.400 2.400 2.400 5.400 0 7.800"/>
    <path d="M55.400 6.400L60.800.8l1.800 1.700-5.500 5.400-2.200.5zM54.400 8.600h8.400"/>
  </g></svg>
  <svg style="left:672px;top:3.800px" width="8" height="8" viewBox="0 0 8 8"><g fill="none" stroke="#555" stroke-width=".7"><path d="M.4 2.400v-2h2M5.600.4h2v2M7.600 5.600v2h-2M2.400 7.600h-2v-2"/><path d="M2.200 2.200h3.600v3.600H2.200z"/></g></svg>
  <div class="t" style="left:684px;top:2.600px;font-size:6.400px;color:#555">110%</div>
  <svg style="left:703.500px;top:7px" width="3" height="2" viewBox="0 0 3 2"><path d="M0 0h3L1.500 1.800z" fill="#777"/></svg>
  <div class="abs" style="left:712px;top:7.400px;width:5.800px;height:1px;background:#444"></div>
  <div class="abs" style="left:724.400px;top:7.500px;width:73.600px;height:.8px;background:#bdbdbd"></div>
  <div class="abs" style="left:758.500px;top:4.600px;width:6.600px;height:6.600px;border-radius:50%;background:#fff;border:.9px solid #555"></div>
  <svg style="left:805px;top:5px" width="6" height="6" viewBox="0 0 6 6"><path d="M3 .2v5.600M.2 3h5.600" stroke="#444" stroke-width=".9"/></svg>
  <svg style="left:817.300px;top:3.600px" width="9" height="9" viewBox="0 0 9 9"><g fill="none" stroke="#555" stroke-width=".8"><path d="M.4 3V.4H3M6 .4h2.600V3M8.600 6v2.600H6M3 8.600H.4V6"/><path d="M.6.600l2.400 2.400M8.400.6L6 3M8.400 8.400L6 6M.6 8.400L3 6" stroke-width=".6"/></g></svg>
</div>
<!-- floating keyboard icon -->
<div class="abs" style="left:2px;top:422px;width:16.500px;height:16.500px;border-radius:2.500px;background:#828686;box-shadow:0 0 1px rgba(0,0,0,.4)"></div>
<svg style="left:4.500px;top:424.500px" width="11.500" height="11.500" viewBox="0 0 12 12"><rect x=".6" y=".6" width="10.800" height="10.800" rx="1.500" fill="none" stroke="#e8e8e8" stroke-width=".9"/><path d="M2.600 3h1.400M5.300 3h1.400M8 3h1.400M2.600 5.200h1.400M5.300 5.200h1.400M8 5.200h1.400M3.400 7.600h5.200" stroke="#e8e8e8" stroke-width="1"/><path d="M4.600 9.600h2.800" stroke="#e8e8e8" stroke-width=".8"/></svg>
</div>
<div id="panel" class="abs">
<div class="t" style="left:5px;top:1.500px;font-size:7.300px;color:#dfe1e4">成员管理</div>
<svg style="left:124.5px;top:5px" width="8" height="3" viewBox="0 0 8 3"><circle cx="1.200" cy="1.500" r=".75" fill="#d0d2d5"/><circle cx="4" cy="1.500" r=".75" fill="#d0d2d5"/><circle cx="6.800" cy="1.500" r=".75" fill="#d0d2d5"/></svg>
<svg style="left:138px;top:2.800px" width="8" height="8" viewBox="0 0 8 8"><path d="M.8.8l6.400 6.400M7.200.8L.8 7.200" stroke="#d6d8db" stroke-width=".9"/></svg>
<div class="abs" style="left:3.500px;top:17px;width:146px;height:17.500px;border:1px solid #2b2d30;border-radius:2.500px;background:#1b1c1e"></div>
<svg style="left:8px;top:22px" width="8" height="8" viewBox="0 0 8 8"><circle cx="3.300" cy="3.300" r="2.500" fill="none" stroke="#8d9094" stroke-width=".8"/><path d="M5.200 5.200l2 2" stroke="#8d9094" stroke-width=".8"/></svg>
<div class="t" style="left:19.500px;top:20.800px;font-size:7.200px;color:#7d8084">搜索</div>
<svg style="left:3px;top:45.00px" width="19" height="19" viewBox="0 0 20 20"><clipPath id="c0"><rect width="20" height="20" rx="1.500"/></clipPath><g clip-path="url(#c0)"><rect width="20" height="20" fill="#2f7fd6"/><path d="M2.500 20c0-4 3-5.600 7.500-5.600s7.500 1.600 7.500 5.600z" fill="#1d2028"/><path d="M8.300 14.500l1.700 3.500 1.700-3.500z" fill="#e9ecf2"/><ellipse cx="10" cy="8.600" rx="3.700" ry="4.500" fill="#d9b59c"/><path d="M6.200 8c0-3.600 1.500-5 3.800-5s3.800 1.400 3.800 5c-.7-1.800-1.900-2.500-3.800-2.500S6.900 6.200 6.200 8z" fill="#6d6a68"/></g></svg>
<div class="t" style="left:25px;top:50.20px;font-size:7.300px;color:#e2e4e7">蒋瑜</div>
<svg style="left:117.2px;top:50.00px" width="10" height="10" viewBox="0 0 10 10"><rect x="3.600" y="1" width="2.800" height="5" rx="1.400" fill="#dadcdf"/><path d="M2.300 4.800c0 1.700 1.200 2.700 2.700 2.700s2.700-1 2.700-2.700M5 7.500v1.400M3.600 9h2.800" fill="none" stroke="#dadcdf" stroke-width=".7"/><path d="M1.600 8.800L8.300 1" stroke="#1e1f21" stroke-width="1.700"/><path d="M1.800 8.700L8.200 1.200" stroke="#e8533a" stroke-width=".8"/></svg>
<svg style="left:133.5px;top:53.60px" width="8" height="3" viewBox="0 0 8 3"><circle cx="1.200" cy="1.500" r=".75" fill="#d0d2d5"/><circle cx="4" cy="1.500" r=".75" fill="#d0d2d5"/><circle cx="6.800" cy="1.500" r=".75" fill="#d0d2d5"/></svg>
<svg style="left:3px;top:69.75px" width="19" height="19" viewBox="0 0 20 20"><clipPath id="c1"><rect width="20" height="20" rx="1.500"/></clipPath><g clip-path="url(#c1)"><rect width="20" height="20" fill="#c98a86"/><path d="M0 0h9l-3 8-6 4z" fill="#e9c9c4"/><path d="M20 0v9l-7 3-2-6z" fill="#b4504e"/><path d="M0 20l6-8 5 2 3 6z" fill="#8c3b3c"/><path d="M11 6l4 6-3 8h8v-11z" fill="#dba7a0"/><path d="M4 9l5-3 2 6-5 3z" fill="#f1dcd6"/></g></svg>
<div class="t" style="left:25px;top:74.95px;font-size:7.300px;color:#e2e4e7">张港</div>
<svg style="left:117.2px;top:74.75px" width="10" height="10" viewBox="0 0 10 10"><rect x="3.600" y="1" width="2.800" height="5" rx="1.400" fill="#dadcdf"/><path d="M2.300 4.800c0 1.700 1.200 2.700 2.700 2.700s2.700-1 2.700-2.700M5 7.500v1.400M3.600 9h2.800" fill="none" stroke="#dadcdf" stroke-width=".7"/><path d="M1.600 8.800L8.300 1" stroke="#1e1f21" stroke-width="1.700"/><path d="M1.800 8.700L8.200 1.200" stroke="#e8533a" stroke-width=".8"/></svg>
<svg style="left:133.5px;top:78.35px" width="8" height="3" viewBox="0 0 8 3"><circle cx="1.200" cy="1.500" r=".75" fill="#d0d2d5"/><circle cx="4" cy="1.500" r=".75" fill="#d0d2d5"/><circle cx="6.800" cy="1.500" r=".75" fill="#d0d2d5"/></svg>
<svg style="left:3px;top:94.50px" width="19" height="19" viewBox="0 0 20 20"><clipPath id="c2"><rect width="20" height="20" rx="1.500"/></clipPath><g clip-path="url(#c2)"><rect width="20" height="20" fill="#2e78d0"/><path d="M2.500 20c0-4 3-5.600 7.500-5.600s7.500 1.600 7.500 5.600z" fill="#1b1e26"/><path d="M8.300 14.500l1.700 3.500 1.700-3.500z" fill="#f2f4f8"/><ellipse cx="10" cy="8.600" rx="3.700" ry="4.500" fill="#e0bfa6"/><path d="M6.200 8c0-3.600 1.500-5 3.800-5s3.800 1.400 3.800 5c-.7-1.800-1.900-2.500-3.800-2.500S6.900 6.200 6.200 8z" fill="#1f1b1a"/></g></svg>
<div class="t" style="left:25px;top:99.70px;font-size:7.300px;color:#e2e4e7">郑荣伟</div>
<svg style="left:117.2px;top:99.50px" width="10" height="10" viewBox="0 0 10 10"><rect x="3.600" y="1" width="2.800" height="5" rx="1.400" fill="#dadcdf"/><path d="M2.300 4.800c0 1.700 1.200 2.700 2.700 2.700s2.700-1 2.700-2.700M5 7.500v1.400M3.600 9h2.800" fill="none" stroke="#dadcdf" stroke-width=".7"/><path d="M1.600 8.800L8.300 1" stroke="#1e1f21" stroke-width="1.700"/><path d="M1.800 8.700L8.200 1.200" stroke="#e8533a" stroke-width=".8"/></svg>
<svg style="left:133.5px;top:103.10px" width="8" height="3" viewBox="0 0 8 3"><circle cx="1.200" cy="1.500" r=".75" fill="#d0d2d5"/><circle cx="4" cy="1.500" r=".75" fill="#d0d2d5"/><circle cx="6.800" cy="1.500" r=".75" fill="#d0d2d5"/></svg>
<svg style="left:3px;top:119.25px" width="19" height="19" viewBox="0 0 20 20"><clipPath id="c3"><rect width="20" height="20" rx="1.500"/></clipPath><g clip-path="url(#c3)"><rect width="20" height="20" fill="#c9c3b8"/><path d="M2.500 20c0-4 3-5.600 7.500-5.600s7.500 1.600 7.500 5.600z" fill="#6a6f5d"/><ellipse cx="10" cy="8.600" rx="3.700" ry="4.500" fill="#d2ad90"/><path d="M6.200 8c0-3.600 1.500-5 3.800-5s3.800 1.400 3.800 5c-.7-1.800-1.900-2.500-3.800-2.500S6.900 6.200 6.200 8z" fill="#2b2623"/></g></svg>
<div class="t" style="left:25px;top:124.45px;font-size:7.300px;color:#e2e4e7">徐红健</div>
<svg style="left:117.2px;top:124.25px" width="10" height="10" viewBox="0 0 10 10"><rect x="3.600" y="1" width="2.800" height="5" rx="1.400" fill="#dadcdf"/><path d="M2.300 4.800c0 1.700 1.200 2.700 2.700 2.700s2.700-1 2.700-2.700M5 7.500v1.400M3.600 9h2.800" fill="none" stroke="#dadcdf" stroke-width=".7"/><path d="M1.600 8.800L8.300 1" stroke="#1e1f21" stroke-width="1.700"/><path d="M1.800 8.700L8.200 1.200" stroke="#e8533a" stroke-width=".8"/></svg>
<svg style="left:133.5px;top:127.85px" width="8" height="3" viewBox="0 0 8 3"><circle cx="1.200" cy="1.500" r=".75" fill="#d0d2d5"/><circle cx="4" cy="1.500" r=".75" fill="#d0d2d5"/><circle cx="6.800" cy="1.500" r=".75" fill="#d0d2d5"/></svg>
<svg style="left:3px;top:144.00px" width="19" height="19" viewBox="0 0 20 20"><clipPath id="c4"><rect width="20" height="20" rx="1.500"/></clipPath><g clip-path="url(#c4)"><rect width="20" height="20" fill="#f4f2f0"/><path d="M5.6 9.5c0-5 2-6.6 4.4-6.6s4.4 1.6 4.4 6.6c0 2.5-.6 4-1 5h-6.8c-.4-1-1-2.500-1-5z" fill="#2a211f"/><path d="M2.500 20c0-4 3-5.600 7.500-5.600s7.500 1.600 7.500 5.600z" fill="#e8e4e2"/><ellipse cx="10" cy="8.600" rx="3.700" ry="4.500" fill="#f0d3c0"/><path d="M6.200 8.200c.2-3.400 1.700-4.600 3.800-4.600s3.600 1.200 3.800 4.600c-1.200-.7-2.200-2.100-2.800-3.100-1 1.500-2.800 2.500-4.800 3.100z" fill="#2a211f"/></g></svg>
<div class="t" style="left:25px;top:149.20px;font-size:7.300px;color:#e2e4e7">姚悦铃</div>
<svg style="left:117.2px;top:149.00px" width="10" height="10" viewBox="0 0 10 10"><rect x="3.600" y="1" width="2.800" height="5" rx="1.400" fill="#dadcdf"/><path d="M2.300 4.800c0 1.700 1.200 2.700 2.700 2.700s2.700-1 2.700-2.700M5 7.500v1.400M3.600 9h2.800" fill="none" stroke="#dadcdf" stroke-width=".7"/><path d="M1.600 8.800L8.300 1" stroke="#1e1f21" stroke-width="1.700"/><path d="M1.800 8.700L8.200 1.200" stroke="#e8533a" stroke-width=".8"/></svg>
<svg style="left:133.5px;top:152.60px" width="8" height="3" viewBox="0 0 8 3"><circle cx="1.200" cy="1.500" r=".75" fill="#d0d2d5"/><circle cx="4" cy="1.500" r=".75" fill="#d0d2d5"/><circle cx="6.800" cy="1.500" r=".75" fill="#d0d2d5"/></svg>
<svg style="left:3px;top:168.75px" width="19" height="19" viewBox="0 0 20 20"><clipPath id="c5"><rect width="20" height="20" rx="1.500"/></clipPath><g clip-path="url(#c5)"><rect width="20" height="20" rx="1.500" fill="#0d86f5"/><text x="10" y="12.800" font-size="7.400" fill="#fff" text-anchor="middle" font-family="Liberation Sans, Noto Sans CJK SC, sans-serif">海生</text></g></svg>
<div class="t" style="left:25px;top:173.95px;font-size:7.300px;color:#e2e4e7">刘海生</div>
<svg style="left:117.2px;top:173.75px" width="10" height="10" viewBox="0 0 10 10"><rect x="3.600" y="1" width="2.800" height="5" rx="1.400" fill="#dadcdf"/><path d="M2.300 4.800c0 1.700 1.200 2.700 2.700 2.700s2.700-1 2.700-2.700M5 7.500v1.400M3.600 9h2.800" fill="none" stroke="#dadcdf" stroke-width=".7"/><path d="M1.600 8.800L8.300 1" stroke="#1e1f21" stroke-width="1.700"/><path d="M1.800 8.700L8.200 1.200" stroke="#e8533a" stroke-width=".8"/></svg>
<svg style="left:133.5px;top:177.35px" width="8" height="3" viewBox="0 0 8 3"><circle cx="1.200" cy="1.500" r=".75" fill="#d0d2d5"/><circle cx="4" cy="1.500" r=".75" fill="#d0d2d5"/><circle cx="6.800" cy="1.500" r=".75" fill="#d0d2d5"/></svg>
<svg style="left:3px;top:193.50px" width="19" height="19" viewBox="0 0 20 20"><clipPath id="c6"><rect width="20" height="20" rx="1.500"/></clipPath><g clip-path="url(#c6)"><rect width="20" height="20" fill="#4f9be6"/><path d="M5.6 9.5c0-5 2-6.6 4.4-6.6s4.4 1.6 4.4 6.6c0 2.5-.6 4-1 5h-6.8c-.4-1-1-2.500-1-5z" fill="#2a1f1c"/><path d="M2.500 20c0-4 3-5.600 7.500-5.600s7.500 1.600 7.500 5.600z" fill="#2a2d36"/><path d="M8.300 14.500l1.700 3.500 1.700-3.500z" fill="#f4f4f4"/><ellipse cx="10" cy="8.600" rx="3.700" ry="4.500" fill="#efd2bf"/><path d="M6.200 8.200c.2-3.400 1.700-4.600 3.800-4.600s3.600 1.200 3.800 4.600c-1.200-.7-2.200-2.100-2.800-3.100-1 1.500-2.800 2.500-4.800 3.100z" fill="#2a1f1c"/></g></svg>
<div class="t" style="left:25px;top:198.70px;font-size:7.300px;color:#e2e4e7">叶乐</div>
<svg style="left:117.2px;top:198.50px" width="10" height="10" viewBox="0 0 10 10"><rect x="3.600" y="1" width="2.800" height="5" rx="1.400" fill="#dadcdf"/><path d="M2.300 4.800c0 1.700 1.200 2.700 2.700 2.700s2.700-1 2.700-2.700M5 7.500v1.400M3.600 9h2.800" fill="none" stroke="#dadcdf" stroke-width=".7"/><path d="M1.600 8.800L8.300 1" stroke="#1e1f21" stroke-width="1.700"/><path d="M1.800 8.700L8.200 1.200" stroke="#e8533a" stroke-width=".8"/></svg>
<svg style="left:133.5px;top:202.10px" width="8" height="3" viewBox="0 0 8 3"><circle cx="1.200" cy="1.500" r=".75" fill="#d0d2d5"/><circle cx="4" cy="1.500" r=".75" fill="#d0d2d5"/><circle cx="6.800" cy="1.500" r=".75" fill="#d0d2d5"/></svg>
<svg style="left:3px;top:218.25px" width="19" height="19" viewBox="0 0 20 20"><clipPath id="c7"><rect width="20" height="20" rx="1.500"/></clipPath><g clip-path="url(#c7)"><rect width="20" height="20" fill="#f2f2f2"/><path d="M2.500 20c0-4 3-5.600 7.500-5.600s7.500 1.600 7.500 5.600z" fill="#20232b"/><path d="M8.300 14.500l1.700 3.500 1.700-3.500z" fill="#f7f7f7"/><ellipse cx="10" cy="8.600" rx="3.700" ry="4.500" fill="#e2c0a8"/><path d="M6.200 8c0-3.600 1.500-5 3.800-5s3.800 1.400 3.800 5c-.7-1.800-1.900-2.500-3.800-2.500S6.900 6.200 6.200 8z" fill="#1f1c1b"/></g></svg>
<div class="t" style="left:25px;top:223.45px;font-size:7.300px;color:#e2e4e7">王晓龙</div>
<svg style="left:117.2px;top:223.25px" width="10" height="10" viewBox="0 0 10 10"><rect x="3.600" y="1" width="2.800" height="5" rx="1.400" fill="#dadcdf"/><path d="M2.300 4.800c0 1.700 1.200 2.700 2.700 2.700s2.700-1 2.700-2.700M5 7.500v1.400M3.600 9h2.800" fill="none" stroke="#dadcdf" stroke-width=".7"/><path d="M1.600 8.800L8.300 1" stroke="#1e1f21" stroke-width="1.700"/><path d="M1.800 8.700L8.200 1.200" stroke="#e8533a" stroke-width=".8"/></svg>
<svg style="left:133.5px;top:226.85px" width="8" height="3" viewBox="0 0 8 3"><circle cx="1.200" cy="1.500" r=".75" fill="#d0d2d5"/><circle cx="4" cy="1.500" r=".75" fill="#d0d2d5"/><circle cx="6.800" cy="1.500" r=".75" fill="#d0d2d5"/></svg>
<svg style="left:3px;top:243.00px" width="19" height="19" viewBox="0 0 20 20"><clipPath id="c8"><rect width="20" height="20" rx="1.500"/></clipPath><g clip-path="url(#c8)"><rect width="20" height="20" fill="#f5f4f4"/><path d="M5.6 9.5c0-5 2-6.6 4.4-6.6s4.4 1.6 4.4 6.6c0 2.5-.6 4-1 5h-6.8c-.4-1-1-2.500-1-5z" fill="#231c1b"/><path d="M2.500 20c0-4 3-5.600 7.500-5.600s7.500 1.600 7.500 5.600z" fill="#f1efee"/><ellipse cx="10" cy="8.600" rx="3.700" ry="4.500" fill="#f1d6c5"/><path d="M6.200 8.200c.2-3.400 1.700-4.600 3.800-4.600s3.600 1.200 3.800 4.600c-1.200-.7-2.200-2.100-2.800-3.100-1 1.500-2.800 2.500-4.800 3.100z" fill="#231c1b"/></g></svg>
<div class="t" style="left:25px;top:248.20px;font-size:7.300px;color:#e2e4e7">梅雪</div>
<svg style="left:117.2px;top:248.00px" width="10" height="10" viewBox="0 0 10 10"><rect x="3.600" y="1" width="2.800" height="5" rx="1.400" fill="#dadcdf"/><path d="M2.300 4.800c0 1.700 1.200 2.700 2.700 2.700s2.700-1 2.700-2.700M5 7.500v1.400M3.600 9h2.800" fill="none" stroke="#dadcdf" stroke-width=".7"/><path d="M1.600 8.800L8.300 1" stroke="#1e1f21" stroke-width="1.700"/><path d="M1.800 8.700L8.200 1.200" stroke="#e8533a" stroke-width=".8"/></svg>
<svg style="left:133.5px;top:251.60px" width="8" height="3" viewBox="0 0 8 3"><circle cx="1.200" cy="1.500" r=".75" fill="#d0d2d5"/><circle cx="4" cy="1.500" r=".75" fill="#d0d2d5"/><circle cx="6.800" cy="1.500" r=".75" fill="#d0d2d5"/></svg>
<svg style="left:3px;top:267.75px" width="19" height="19" viewBox="0 0 20 20"><clipPath id="c9"><rect width="20" height="20" rx="1.500"/></clipPath><g clip-path="url(#c9)"><rect width="20" height="20" fill="#f3f1ef"/><path d="M5.6 9.5c0-5 2-6.6 4.4-6.6s4.4 1.6 4.4 6.6c0 2.5-.6 4-1 5h-6.8c-.4-1-1-2.500-1-5z" fill="#2b2220"/><path d="M2.500 20c0-4 3-5.600 7.500-5.600s7.500 1.600 7.500 5.600z" fill="#1f2128"/><ellipse cx="10" cy="8.600" rx="3.700" ry="4.500" fill="#edcfba"/><path d="M6.200 8.200c.2-3.400 1.700-4.600 3.800-4.600s3.600 1.200 3.800 4.600c-1.200-.7-2.200-2.100-2.800-3.100-1 1.500-2.800 2.500-4.800 3.100z" fill="#2b2220"/></g></svg>
<div class="t" style="left:25px;top:272.95px;font-size:7.300px;color:#e2e4e7">邸兴红</div>
<svg style="left:117.2px;top:272.75px" width="10" height="10" viewBox="0 0 10 10"><rect x="3.600" y="1" width="2.800" height="5" rx="1.400" fill="#dadcdf"/><path d="M2.300 4.800c0 1.700 1.200 2.700 2.700 2.700s2.700-1 2.700-2.700M5 7.500v1.400M3.600 9h2.800" fill="none" stroke="#dadcdf" stroke-width=".7"/><path d="M1.600 8.800L8.300 1" stroke="#1e1f21" stroke-width="1.700"/><path d="M1.800 8.700L8.200 1.200" stroke="#e8533a" stroke-width=".8"/></svg>
<svg style="left:133.5px;top:276.35px" width="8" height="3" viewBox="0 0 8 3"><circle cx="1.200" cy="1.500" r=".75" fill="#d0d2d5"/><circle cx="4" cy="1.500" r=".75" fill="#d0d2d5"/><circle cx="6.800" cy="1.500" r=".75" fill="#d0d2d5"/></svg>
<svg style="left:3px;top:292.50px" width="19" height="19" viewBox="0 0 20 20"><clipPath id="c10"><rect width="20" height="20" rx="1.500"/></clipPath><g clip-path="url(#c10)"><rect width="20" height="20" fill="#9fb6cf"/><path d="M0 0h20v7H0z" fill="#89a7cb"/><path d="M6 20c0-5 1.500-7 3-8-1-1-1.500-2.500-.5-4 1-1.300 3-1.200 3.800 0 .9 1.400.4 3-.5 4 2 1 4 3 4.200 8z" fill="#7d8794"/><path d="M9 12c1 .5 2 .5 3 0l1 8H8z" fill="#98a1ab"/></g></svg>
<div class="t" style="left:25px;top:297.70px;font-size:7.300px;color:#e2e4e7">赵颖杰</div>
<svg style="left:117.2px;top:297.50px" width="10" height="10" viewBox="0 0 10 10"><rect x="3.600" y="1" width="2.800" height="5" rx="1.400" fill="#dadcdf"/><path d="M2.300 4.800c0 1.700 1.200 2.700 2.700 2.700s2.700-1 2.700-2.700M5 7.500v1.400M3.600 9h2.800" fill="none" stroke="#dadcdf" stroke-width=".7"/><path d="M1.600 8.800L8.300 1" stroke="#1e1f21" stroke-width="1.700"/><path d="M1.800 8.700L8.200 1.200" stroke="#e8533a" stroke-width=".8"/></svg>
<svg style="left:133.5px;top:301.10px" width="8" height="3" viewBox="0 0 8 3"><circle cx="1.200" cy="1.500" r=".75" fill="#d0d2d5"/><circle cx="4" cy="1.500" r=".75" fill="#d0d2d5"/><circle cx="6.800" cy="1.500" r=".75" fill="#d0d2d5"/></svg>
<svg style="left:3px;top:317.25px" width="19" height="19" viewBox="0 0 20 20"><clipPath id="c11"><rect width="20" height="20" rx="1.500"/></clipPath><g clip-path="url(#c11)"><rect width="20" height="20" fill="#cfd0d2"/><path d="M2.500 20c0-4 3-5.600 7.500-5.600s7.500 1.600 7.500 5.600z" fill="#22252d"/><path d="M8.300 14.500l1.700 3.500 1.700-3.500z" fill="#f6f6f6"/><ellipse cx="10" cy="8.600" rx="3.700" ry="4.500" fill="#e4c6b1"/><path d="M6.200 8c0-3.600 1.500-5 3.800-5s3.800 1.400 3.800 5c-.7-1.800-1.900-2.500-3.800-2.500S6.900 6.200 6.200 8z" fill="#211d1c"/></g></svg>
<div class="t" style="left:25px;top:322.45px;font-size:7.300px;color:#e2e4e7">张昌辰</div>
<svg style="left:117.2px;top:322.25px" width="10" height="10" viewBox="0 0 10 10"><rect x="3.600" y="1" width="2.800" height="5" rx="1.400" fill="#dadcdf"/><path d="M2.300 4.800c0 1.700 1.200 2.700 2.700 2.700s2.700-1 2.700-2.700M5 7.500v1.400M3.600 9h2.800" fill="none" stroke="#dadcdf" stroke-width=".7"/><path d="M1.600 8.800L8.300 1" stroke="#1e1f21" stroke-width="1.700"/><path d="M1.800 8.700L8.200 1.200" stroke="#e8533a" stroke-width=".8"/></svg>
<svg style="left:133.5px;top:325.85px" width="8" height="3" viewBox="0 0 8 3"><circle cx="1.200" cy="1.500" r=".75" fill="#d0d2d5"/><circle cx="4" cy="1.500" r=".75" fill="#d0d2d5"/><circle cx="6.800" cy="1.500" r=".75" fill="#d0d2d5"/></svg>
<svg style="left:3px;top:342.00px" width="19" height="19" viewBox="0 0 20 20"><clipPath id="c12"><rect width="20" height="20" rx="1.500"/></clipPath><g clip-path="url(#c12)"><rect width="20" height="20" rx="1.500" fill="#0d86f5"/><text x="10" y="12.800" font-size="7.400" fill="#fff" text-anchor="middle" font-family="Liberation Sans, Noto Sans CJK SC, sans-serif">俞徽</text></g></svg>
<div class="t" style="left:25px;top:347.20px;font-size:7.300px;color:#e2e4e7">俞徽</div>
<svg style="left:117.2px;top:347.00px" width="10" height="10" viewBox="0 0 10 10"><rect x="3.600" y="1" width="2.800" height="5" rx="1.400" fill="#dadcdf"/><path d="M2.300 4.800c0 1.700 1.200 2.700 2.700 2.700s2.700-1 2.700-2.700M5 7.500v1.400M3.600 9h2.800" fill="none" stroke="#dadcdf" stroke-width=".7"/><path d="M1.600 8.800L8.300 1" stroke="#1e1f21" stroke-width="1.700"/><path d="M1.800 8.700L8.200 1.200" stroke="#e8533a" stroke-width=".8"/></svg>
<svg style="left:133.5px;top:350.60px" width="8" height="3" viewBox="0 0 8 3"><circle cx="1.200" cy="1.500" r=".75" fill="#d0d2d5"/><circle cx="4" cy="1.500" r=".75" fill="#d0d2d5"/><circle cx="6.800" cy="1.500" r=".75" fill="#d0d2d5"/></svg>
<svg style="left:3px;top:366.75px" width="19" height="19" viewBox="0 0 20 20"><clipPath id="c13"><rect width="20" height="20" rx="1.500"/></clipPath><g clip-path="url(#c13)"><rect width="20" height="20" fill="#9aa58c"/><path d="M0 0h20v6H0z" fill="#c6cbb8"/><path d="M4.500 11c0-5.500 2.300-7.500 5.500-7.500s5.500 2 5.500 7.500c0 3-.5 4.500-1 5.500H5.500c-.5-1-1-2.500-1-5.500z" fill="#5a4636"/><path d="M1.500 20c0-4 3-5.500 8.500-5.500s8.500 1.500 8.500 5.500z" fill="#7a6a6a"/><ellipse cx="10" cy="9.500" rx="3.200" ry="3.900" fill="#e5c0a4"/><path d="M7 9h2.600M10.400 9H13" stroke="#3a3030" stroke-width=".7"/></g></svg>
<div class="t" style="left:25px;top:371.95px;font-size:7.300px;color:#e2e4e7">李峰</div>
<svg style="left:117.2px;top:371.75px" width="10" height="10" viewBox="0 0 10 10"><rect x="3.600" y="1" width="2.800" height="5" rx="1.400" fill="#dadcdf"/><path d="M2.300 4.800c0 1.700 1.200 2.700 2.700 2.700s2.700-1 2.700-2.700M5 7.500v1.400M3.600 9h2.800" fill="none" stroke="#dadcdf" stroke-width=".7"/><path d="M1.600 8.800L8.300 1" stroke="#1e1f21" stroke-width="1.700"/><path d="M1.800 8.700L8.200 1.200" stroke="#e8533a" stroke-width=".8"/></svg>
<svg style="left:133.5px;top:375.35px" width="8" height="3" viewBox="0 0 8 3"><circle cx="1.200" cy="1.500" r=".75" fill="#d0d2d5"/><circle cx="4" cy="1.500" r=".75" fill="#d0d2d5"/><circle cx="6.800" cy="1.500" r=".75" fill="#d0d2d5"/></svg>
<svg style="left:6.500px;top:399.5px" width="5" height="4" viewBox="0 0 5 4"><path d="M.3.400h4.400L2.500 3.600z" fill="#8f9296"/></svg>
<div class="t" style="left:17.500px;top:396.0px;font-size:7.200px;color:#9a9da1">未入会 (3)</div>
<div class="t" style="left:114.500px;top:396.0px;font-size:7.200px;color:#1a82f0">一键呼叫</div>
<svg style="left:3px;top:415.50px" width="19" height="19" viewBox="0 0 20 20"><clipPath id="d0"><rect width="20" height="20" rx="1.500"/></clipPath><g clip-path="url(#d0)"><rect width="20" height="20" fill="#8e3a32"/><path d="M0 0h20v5H0z" fill="#a6574a"/><path d="M5 10.500c0-5.500 2.200-7 5-7s5 1.500 5 7c0 3-.5 4.500-1 5.500H6c-.5-1-1-2.500-1-5.500z" fill="#2c1c18"/><path d="M2 20c0-4 3-5.500 8-5.500s8 1.500 8 5.500z" fill="#d8c9b0"/><ellipse cx="10" cy="9" rx="3" ry="3.700" fill="#e9c6aa"/><path d="M7.200 8.800h2.300M10.500 8.800h2.300" stroke="#3a2a2a" stroke-width=".6"/></g></svg>
<div class="t" style="left:25px;top:416.40px;font-size:7.250px;color:#e6e8ea">许源</div>
<div class="abs" style="left:25px;top:426.10px;width:17.5px;height:8.500px;border:1px solid #4c4f53;border-radius:2px;font-size:5px;line-height:6.500px;color:#b9bcc0;text-align:center;white-space:nowrap">呼叫中</div>
<svg style="left:116.5px;top:422.50px" width="9.400" height="5" viewBox="0 0 10 6"><path d="M.6 4.200c0-1.900 2-3.200 4.400-3.200s4.400 1.300 4.400 3.200c0 .5-.3.800-.7.800H7.400c-.4 0-.6-.3-.6-.7V3.500c-.6-.3-1.200-.4-1.800-.4s-1.200.1-1.800.4v.8c0 .4-.2.700-.6.700H1.300c-.4 0-.7-.3-.7-.8z" fill="#dcdee1"/></svg>
<svg style="left:133.5px;top:423.80px" width="8" height="3" viewBox="0 0 8 3"><circle cx="1.200" cy="1.500" r=".75" fill="#d0d2d5"/><circle cx="4" cy="1.500" r=".75" fill="#d0d2d5"/><circle cx="6.800" cy="1.500" r=".75" fill="#d0d2d5"/></svg>
<svg style="left:3px;top:440.25px" width="19" height="19" viewBox="0 0 20 20"><clipPath id="d1"><rect width="20" height="20" rx="1.500"/></clipPath><g clip-path="url(#d1)"><rect width="20" height="20" rx="1.500" fill="#0d86f5"/><text x="10" y="12.800" font-size="7.400" fill="#fff" text-anchor="middle" font-family="Liberation Sans, Noto Sans CJK SC, sans-serif">统政</text></g></svg>
<div class="t" style="left:25px;top:441.15px;font-size:7.250px;color:#e6e8ea">李统政</div>
<div class="abs" style="left:25px;top:450.85px;width:17.5px;height:8.500px;border:1px solid #4c4f53;border-radius:2px;font-size:5px;line-height:6.500px;color:#b9bcc0;text-align:center;white-space:nowrap">呼叫中</div>
<svg style="left:116.5px;top:447.25px" width="9.400" height="5" viewBox="0 0 10 6"><path d="M.6 4.200c0-1.900 2-3.200 4.400-3.200s4.400 1.300 4.400 3.200c0 .5-.3.800-.7.800H7.400c-.4 0-.6-.3-.6-.7V3.500c-.6-.3-1.200-.4-1.800-.4s-1.200.1-1.800.4v.8c0 .4-.2.700-.6.700H1.300c-.4 0-.7-.3-.7-.8z" fill="#dcdee1"/></svg>
<svg style="left:133.5px;top:448.55px" width="8" height="3" viewBox="0 0 8 3"><circle cx="1.200" cy="1.500" r=".75" fill="#d0d2d5"/><circle cx="4" cy="1.500" r=".75" fill="#d0d2d5"/><circle cx="6.800" cy="1.500" r=".75" fill="#d0d2d5"/></svg>
<svg style="left:3px;top:465.00px" width="19" height="19" viewBox="0 0 20 20"><clipPath id="d2"><rect width="20" height="20" rx="1.500"/></clipPath><g clip-path="url(#d2)"><rect width="20" height="20" fill="#d9cdbd"/><path d="M0 14h20v6H0z" fill="#a89a88"/><path d="M8 0h1l.6 8 1.400 6 2 6h-1.500l-1.500-4h-3l-1.500 4H4l2-6 1.400-6z" fill="#4b443f"/><path d="M12 0h8v14h-6z" fill="#efe7dc"/></g></svg>
<div class="t" style="left:25px;top:465.90px;font-size:7.250px;color:#e6e8ea">陈光洲</div>
<div class="abs" style="left:25px;top:475.60px;width:28.5px;height:8.500px;border:1px solid #4c4f53;border-radius:2px;font-size:5px;line-height:6.500px;color:#b9bcc0;text-align:center;white-space:nowrap">超时未接通</div>
<svg style="left:117.5px;top:470.40px" width="8" height="9" viewBox="0 0 8 9"><path d="M1.300.8c.4-.4.900-.4 1.200 0l.9 1.300c.2.300.1.700-.1 1l-.6.500c.5 1 1.200 1.800 2.100 2.400l.6-.5c.3-.2.700-.2 1 0l1.100.9c.4.300.4.800 0 1.200-.7.800-1.600.9-2.600.4C2.900 7 1.300 5 .7 3 .5 2.100.7 1.400 1.300.8z" fill="#dcdee1"/></svg>
<svg style="left:133.5px;top:473.30px" width="8" height="3" viewBox="0 0 8 3"><circle cx="1.200" cy="1.500" r=".75" fill="#d0d2d5"/><circle cx="4" cy="1.500" r=".75" fill="#d0d2d5"/><circle cx="6.800" cy="1.500" r=".75" fill="#d0d2d5"/></svg>
<div class="abs" style="left:147.700px;top:42px;width:3.300px;height:452px;background:#2b2c2f;border-radius:1.500px"></div>
<div class="abs" style="left:147.700px;top:232px;width:3.300px;height:262px;background:#404245;border-radius:1.500px"></div>
</div>
<div id="zoombar" class="abs" style="top:487px;height:16.300px;width:834.500px;background:#292c2d">
  <div class="abs" style="left:1.500px;top:2px;width:30px;height:11.300px;background:#18191a;border-radius:2px"></div>
  <svg style="left:5.800px;top:4.600px" width="7.400" height="6" viewBox="0 0 7.400 6"><rect width="7.400" height="6" rx=".8" fill="#19c24a"/><path d="M3.700 1.300v3.200M2.400 2.500l1.300-1.300L5 2.500" fill="none" stroke="#18191a" stroke-width=".8"/></svg>
  <div class="t" style="left:15.800px;top:2.700px;font-size:6.200px;color:#e4e6e8">石杨</div>
  <div class="abs" style="left:34.300px;top:2px;width:40.500px;height:11.300px;background:#18191a;border-radius:2px"></div>
  <svg style="left:36.800px;top:4px" width="7" height="7.500" viewBox="0 0 7 7.500"><path d="M2.200.3h2.600v2.400l1.600 1.600v.7H.6v-.7l1.600-1.600z" fill="#19c24a"/><path d="M3.500 5v2.300" stroke="#19c24a" stroke-width=".8"/></svg>
  <div class="t" style="left:47.900px;top:2.700px;font-size:6.200px;color:#e4e6e8">取消固定</div>
  <div class="abs" style="left:77.400px;top:2px;width:50px;height:11.300px;background:#18191a;border-radius:2px"></div>
  <div class="abs" style="left:81px;top:7.300px;width:5.400px;height:.9px;background:#d8dadc"></div>
  <div class="t" style="left:90.800px;top:2.700px;font-size:6.800px;color:#e4e6e8;letter-spacing:-.1px">100%</div>
  <svg style="left:109.800px;top:6px" width="4" height="3.500" viewBox="0 0 4 3.500"><path d="M.3.300L2 3 3.700.3" fill="none" stroke="#b8babc" stroke-width=".6"/></svg>
  <svg style="left:118.400px;top:5px" width="5.600" height="5.600" viewBox="0 0 5.600 5.600"><path d="M2.800 0v5.600M0 2.800h5.600" stroke="#d8dadc" stroke-width=".8"/></svg>
</div>
<div id="meetbar" class="abs" style="top:503.300px;height:27.500px">
  <!-- left: mic / camera -->
  <svg style="left:14.500px;top:4px" width="10" height="11" viewBox="0 0 10 11"><rect x="3.300" y=".6" width="3.400" height="6" rx="1.700" fill="#dadcdf"/><path d="M1.600 5c0 2 1.500 3.200 3.400 3.200S8.400 7 8.400 5M5 8.200v1.600M3.400 10h3.200" fill="none" stroke="#dadcdf" stroke-width=".8"/><path d="M1 9.800L8.800.4" stroke="#1e1f21" stroke-width="2"/><path d="M1.200 9.700L8.600.6" stroke="#e8533a" stroke-width=".9"/></svg>
  <svg style="left:29.500px;top:8.800px" width="3.400" height="2.200" viewBox="0 0 3.400 2.200"><path d="M0 0h3.400L1.700 2z" fill="#9a9da1"/></svg>
  <div class="t" style="left:4.600px;top:18.200px;font-size:7.100px;color:#a2a5a9">解除静音</div>
  <svg style="left:53.500px;top:4.500px" width="11.500" height="9" viewBox="0 0 11.500 9"><rect x=".3" y="1" width="7.400" height="7" rx="1" fill="#dadcdf"/><path d="M8 3.600l3-2v5.800l-3-2z" fill="#dadcdf"/><path d="M.6 8.600L9.600 0" stroke="#1e1f21" stroke-width="2"/><path d="M.8 8.500L9.500.2" stroke="#e8533a" stroke-width=".9"/></svg>
  <svg style="left:69.500px;top:8.800px" width="3.400" height="2.200" viewBox="0 0 3.400 2.200"><path d="M0 0h3.400L1.700 2z" fill="#9a9da1"/></svg>
  <div class="t" style="left:45px;top:18.200px;font-size:7.100px;color:#a2a5a9">开摄像头</div>
  <!-- center icons (meetbar top abs = 503.3) -->
  <svg style="left:292.400px;top:4.900px" width="10.500" height="10.500" viewBox="0 0 10.500 10.500"><path d="M5.250.3L9.800 1.900v3.300c0 2.400-1.800 4.200-4.550 5C2.500 9.400.7 7.600.7 5.200V1.900z" fill="#dcdee1"/><path d="M3.300 5l1.500 1.500 2.500-2.700" fill="none" stroke="#1e1f21" stroke-width="1"/></svg>
  <div class="t" style="left:290.600px;top:18.500px;font-size:7px;color:#a2a5a9">安全</div>
  <svg style="left:332px;top:4.500px" width="11.500" height="11" viewBox="0 0 11.500 11"><circle cx="4.600" cy="2.600" r="2.300" fill="#dcdee1"/><path d="M.4 10V8.400c0-1.600 1.400-2.600 4.200-2.600 1 0 1.800.1 2.400.4-.7.600-1.100 1.400-1.100 2.300 0 .6.100 1 .4 1.500z" fill="#dcdee1"/><circle cx="8.700" cy="8.200" r="2.600" fill="#dcdee1"/><path d="M8.700 6.800v2.800M7.300 8.200h2.800" stroke="#1e1f21" stroke-width=".8"/></svg>
  <div class="t" style="left:330.600px;top:18.500px;font-size:7px;color:#a2a5a9">邀请</div>
  <svg style="left:372px;top:4.800px" width="11" height="10.500" viewBox="0 0 11 10.500"><circle cx="3.500" cy="2.600" r="2.200" fill="#dcdee1"/><circle cx="8" cy="3" r="1.800" fill="#dcdee1"/><path d="M.2 10V8.300c0-1.600 1.200-2.600 3.300-2.600s3.300 1 3.300 2.600V10z" fill="#dcdee1"/><path d="M7.400 10V8c0-.8-.2-1.400-.6-2 .4-.2.800-.2 1.200-.2 1.700 0 2.800.9 2.800 2.400V10z" fill="#dcdee1"/></svg>
  <div class="t" style="left:383.500px;top:5.200px;font-size:7.400px;color:#c9ccd0;letter-spacing:-.2px;transform:scaleY(1.100)">26</div>
  <div class="t" style="left:370.500px;top:18.500px;font-size:7px;color:#a2a5a9">成员</div>
  <svg style="left:412px;top:5.700px" width="11.600" height="9" viewBox="0 0 11.600 9"><rect width="11.600" height="9" rx="1.200" fill="#dcdee1"/><path d="M5.800 6.800V2.600M3.800 4.400l2-2 2 2" fill="none" stroke="#1e1f21" stroke-width="1"/></svg>
  <div class="t" style="left:410.800px;top:18.500px;font-size:7px;color:#a2a5a9">共享</div>
  <svg style="left:452.800px;top:5.400px" width="10.600" height="9.500" viewBox="0 0 10.600 9.500"><path d="M1.200 0h8.200c.7 0 1.200.5 1.200 1.200v5c0 .7-.5 1.200-1.200 1.200H4L1.400 9.400V7.400h-.2C.5 7.400 0 6.900 0 6.200v-5C0 .5.500 0 1.200 0z" fill="#dcdee1"/><path d="M3.200 2.600v1.800M7.400 2.600v1.800" stroke="#1e1f21" stroke-width="1"/></svg>
  <div class="t" style="left:451px;top:18.500px;font-size:7px;color:#a2a5a9">聊天</div>
  <svg style="left:492.800px;top:4.600px" width="10.600" height="10.600" viewBox="0 0 10.600 10.600"><circle cx="5.300" cy="5.300" r="5.300" fill="#dcdee1"/><circle cx="3.600" cy="4" r=".8" fill="#1e1f21"/><circle cx="7" cy="4" r=".8" fill="#1e1f21"/><path d="M2.800 6.400c.6 1.200 1.500 1.800 2.500 1.800s1.900-.6 2.500-1.800" fill="none" stroke="#1e1f21" stroke-width=".8"/></svg>
  <div class="t" style="left:491px;top:18.500px;font-size:7px;color:#a2a5a9">互动</div>
  <svg style="left:533px;top:4.400px" width="11" height="11" viewBox="0 0 11 11"><circle cx="5.500" cy="5.500" r="4.800" fill="none" stroke="#ee5a24" stroke-width="1.100"/><rect x="3.300" y="3.300" width="4.400" height="4.400" rx=".9" fill="#ee5a24"/></svg>
  <div class="t" style="left:527.400px;top:18.500px;font-size:7.200px;color:#a2a5a9">录制中</div>
  <svg style="left:574.400px;top:8.800px" width="8.200" height="2" viewBox="0 0 8.200 2"><circle cx="1" cy="1" r=".85" fill="#dcdee1"/><circle cx="4.100" cy="1" r=".85" fill="#dcdee1"/><circle cx="7.200" cy="1" r=".85" fill="#dcdee1"/></svg>
  <div class="t" style="left:571px;top:18.500px;font-size:7.200px;color:#a2a5a9">更多</div>
  <!-- right buttons -->
  <div class="abs" style="left:798px;top:7.700px;width:31.500px;height:17px;border-radius:2.500px;background:#f0561f"></div>
  <div class="t" style="left:806.300px;top:11.200px;font-size:7.300px;color:#fff">结束</div>
  <div class="abs" style="left:841px;top:8.300px;width:69px;height:16.400px;border-radius:2px;background:#303234"></div>
  <div class="t" style="left:861.700px;top:11.500px;font-size:7.100px;color:#eceef0">全员静音</div>
  <div class="abs" style="left:914.300px;top:8.300px;width:69.300px;height:16.400px;border-radius:2px;background:#303234"></div>
  <div class="t" style="left:941.700px;top:11.500px;font-size:7.100px;color:#eceef0">更多</div>
</div>
<div id="taskbar" class="abs" style="top:530.800px;height:25.200px;background:linear-gradient(90deg,#1c1b1b,#1e1b1b 40%,#1c1b1c 70%,#1b1b1d)">
  <!-- windows logo -->
  <svg style="left:442.700px;top:6.900px" width="12.300" height="12" viewBox="0 0 12.300 12"><defs><linearGradient id="wg" x1="0" y1="0" x2="1" y2="1"><stop offset="0" stop-color="#6fd6fb"/><stop offset="1" stop-color="#1592e6"/></linearGradient></defs><path d="M0 0h5.800v5.700H0zM6.500 0h5.800v5.700H6.500zM0 6.300h5.800V12H0zM6.500 6.300h5.800V12H6.500z" fill="url(#wg)"/></svg>
  <!-- folder -->
  <svg style="left:465px;top:7.200px" width="13.600" height="11.400" viewBox="0 0 13.600 11.400"><path d="M0 1.200C0 .5.500 0 1.200 0h3.400l1.400 1.600h6.400c.7 0 1.200.5 1.200 1.200v7.400c0 .7-.5 1.200-1.200 1.200H1.200C.5 11.400 0 10.900 0 10.200z" fill="#f5b82c"/><path d="M0 3.400h13.600v6.800c0 .7-.5 1.200-1.200 1.200H1.200C.5 11.400 0 10.900 0 10.200z" fill="#fbd35a"/><path d="M4 8h5.600v3.400H4z" fill="#2b7fd8"/></svg>
  <!-- green e -->
  <svg style="left:488.500px;top:6.300px" width="12" height="12.500" viewBox="0 0 12 12.500"><circle cx="6" cy="6.700" r="5.500" fill="#43b649"/><circle cx="6" cy="6.700" r="5.500" fill="none" stroke="#9bd85a" stroke-width=".8"/><path d="M3.200 7h5.600c0-1.900-1.100-3-2.800-3S3.200 5.200 3.200 7c0 1.800 1.100 3 2.900 3 1.200 0 2-.5 2.500-1.300" fill="none" stroke="#fff" stroke-width="1.300"/><path d="M.8 3.600C3 .6 7.600-.4 10.800 1.200" fill="none" stroke="#f39c1f" stroke-width=".7"/></svg>
  <!-- blue bird -->
  <svg style="left:511.400px;top:6.900px" width="11.800" height="12" viewBox="0 0 11.800 12"><rect width="11.800" height="12" rx="2.600" fill="#1b7ff0"/><path d="M2.600 2l6.400 4.600-2.600.6 1.600 3-1.400.4-1.400-3-2 1.600z" fill="#fff"/></svg>
  <div class="abs" style="left:515.800px;top:21.600px;width:3.200px;height:1px;border-radius:.5px;background:#9a9a9a"></div>
  <!-- meeting app -->
  <div class="abs" style="left:529.600px;top:2px;width:20.600px;height:19.400px;border-radius:2.200px;background:#2e2d2e"></div>
  <svg style="left:533.800px;top:6.900px" width="12" height="12" viewBox="0 0 12 12"><rect width="12" height="12" rx="2.600" fill="#1a78f2"/><rect x="2.400" y="3.800" width="5" height="4.400" rx=".9" fill="#fff"/><path d="M7.800 5.400l2-1.300v3.800l-2-1.300z" fill="#fff"/></svg>
  <div class="abs" style="left:535.600px;top:21.500px;width:8.600px;height:1.200px;border-radius:.6px;background:#7db4ea"></div>
  <!-- tray -->
  <svg style="left:832.600px;top:11px" width="7" height="4" viewBox="0 0 7 4"><path d="M.4 3.600L3.500.6l3.100 3" fill="none" stroke="#e6e6e6" stroke-width=".8"/></svg>
  <svg style="left:847px;top:8px" width="7" height="10" viewBox="0 0 7 10"><rect x="2.200" y=".4" width="2.600" height="5.400" rx="1.300" fill="none" stroke="#e6e6e6" stroke-width=".7"/><path d="M.8 4.600c0 1.700 1.100 2.700 2.700 2.700s2.700-1 2.700-2.700M3.500 7.300v2" fill="none" stroke="#e6e6e6" stroke-width=".7"/></svg>
  <div class="t" style="left:862.500px;top:8px;font-size:8.500px;color:#ececec">英</div>
  <svg style="left:879px;top:9.300px" width="9" height="7" viewBox="0 0 9 7"><path d="M.4 2.400C1.600 1.200 3 .6 4.500.6s2.900.6 4.100 1.800L4.500 6.600z" fill="none" stroke="#e6e6e6" stroke-width=".7"/><path d="M2 3.800c.7-.7 1.500-1 2.500-1s1.800.3 2.500 1" fill="none" stroke="#e6e6e6" stroke-width=".7"/></svg>
  <svg style="left:891px;top:9.300px" width="9" height="7" viewBox="0 0 9 7"><path d="M.4 2.400h1.600L4 .6v5.800L2 4.600H.4z" fill="none" stroke="#e6e6e6" stroke-width=".7"/><path d="M5.600 2l2.600 3M8.200 2L5.600 5" stroke="#e6e6e6" stroke-width=".6"/></svg>
  <svg style="left:903.800px;top:9.500px" width="9.500" height="6.500" viewBox="0 0 9.500 6.500"><rect x="1.400" y="1.200" width="7" height="4.400" rx=".8" fill="#e6e6e6"/><path d="M8.700 2.600h.6v1.600h-.6z" fill="#e6e6e6"/><path d="M.4.400l2 1.400-.8 1 2 1" fill="none" stroke="#e6e6e6" stroke-width=".7"/></svg>
  <div class="t" style="left:920px;top:3.800px;width:45.700px;text-align:right;font-size:6px;color:#ececec">19:03</div>
  <div class="t" style="left:915px;top:11.800px;width:50.700px;text-align:right;font-size:6.300px;color:#ececec">2023/6/8 星期四</div>
  <svg style="left:970.500px;top:9px" width="8" height="8.500" viewBox="0 0 8 8.500"><path d="M4.400.5C6.200 1 7.400 2.500 7.400 4.300c0 2.100-1.700 3.800-3.800 3.800-1.300 0-2.500-.7-3.100-1.700 2.600.3 4.600-2.200 3.900-5.900z" fill="none" stroke="#e6e6e6" stroke-width=".7"/></svg>
</div>
<div class="abs" style="left:5px;top:34.800px;width:76.500px;height:27px;border-radius:13.500px;background:rgba(22,23,24,.73)"></div>
<div class="abs" style="left:8.800px;top:39.600px;width:18.300px;height:18.300px;border-radius:50%;background:#0d86f5;color:#fff;font-size:5.200px;line-height:18.300px;text-align:center;white-space:nowrap">统政</div>
<svg style="left:29.700px;top:39.600px" width="18.300" height="18.300" viewBox="0 0 20 20"><clipPath id="pc"><circle cx="10" cy="10" r="10"/></clipPath><g clip-path="url(#pc)"><rect width="20" height="20" fill="#8e3a32"/><path d="M0 0h20v5H0z" fill="#a6574a"/><path d="M5 10.500c0-5.500 2.200-7 5-7s5 1.500 5 7c0 3-.5 4.500-1 5.500H6c-.5-1-1-2.500-1-5.500z" fill="#2c1c18"/><path d="M2 20c0-4 3-5.500 8-5.500s8 1.500 8 5.500z" fill="#d8c9b0"/><ellipse cx="10" cy="9" rx="3" ry="3.700" fill="#e9c6aa"/><path d="M7.200 8.800h2.300M10.500 8.800h2.300" stroke="#3a2a2a" stroke-width=".6"/></g></svg>
<div class="t" style="left:49.600px;top:43.200px;font-size:6.400px;color:#f2f2f2">呼叫中</div>
</body>
</html>
